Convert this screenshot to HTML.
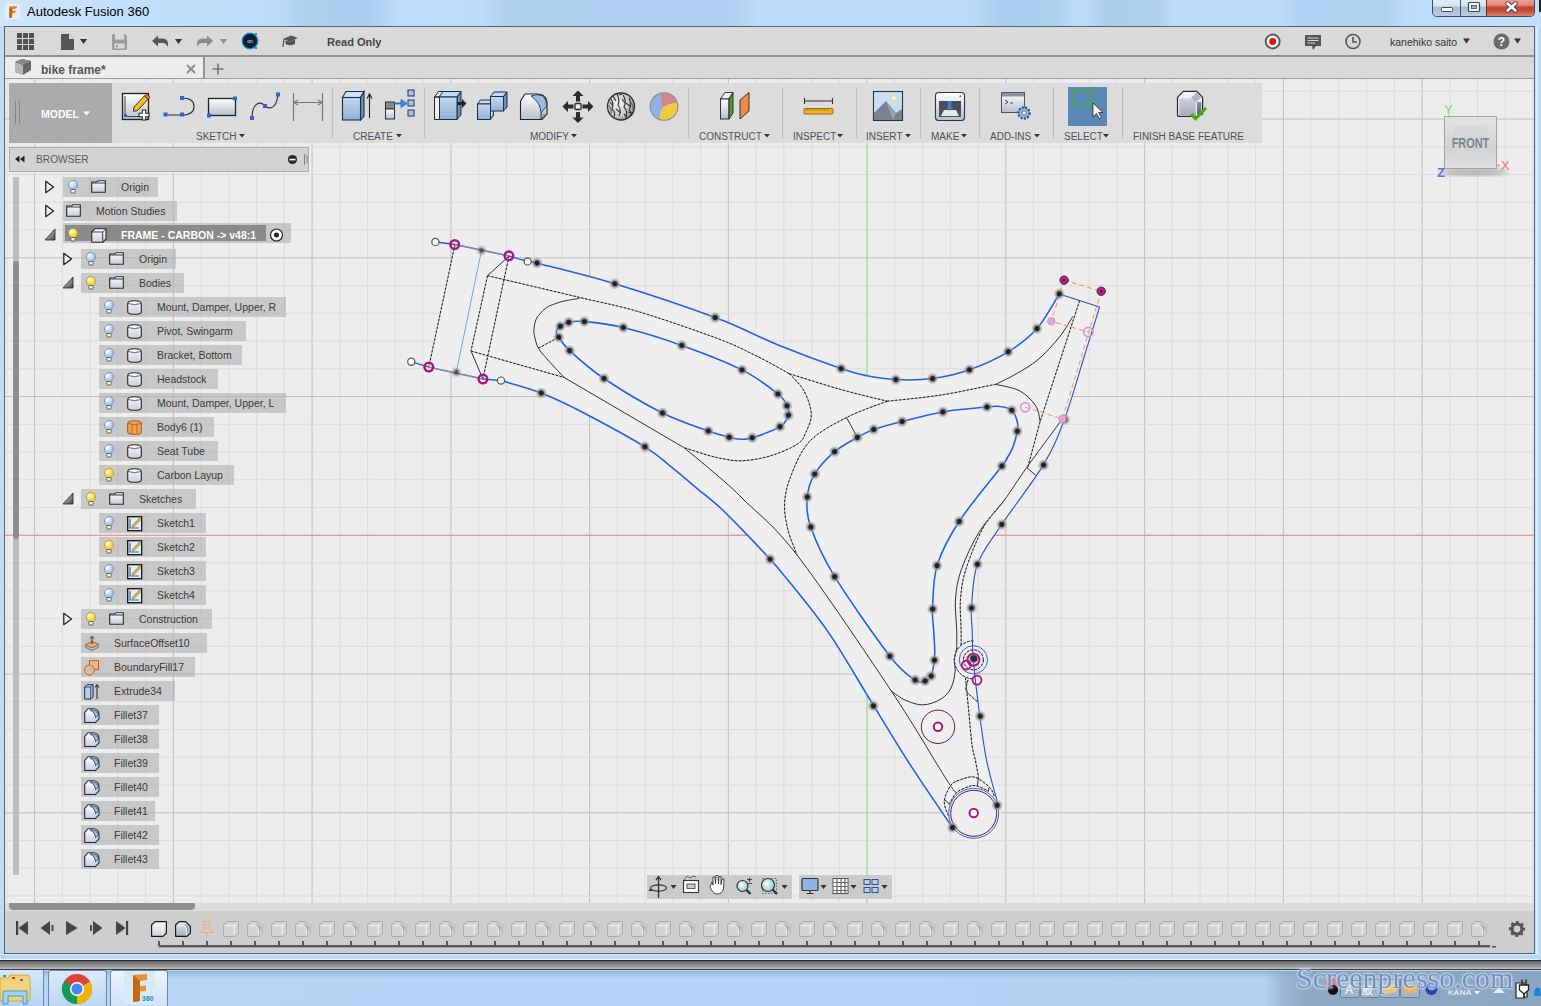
<!DOCTYPE html>
<html><head><meta charset="utf-8">
<style>
*{margin:0;padding:0;box-sizing:border-box}
html,body{width:1541px;height:1006px;overflow:hidden;font-family:"Liberation Sans",sans-serif;background:#b9d5f3;position:relative}
.a{position:absolute}
#title{left:0;top:0;width:1541px;height:26px;background:linear-gradient(90deg,#cfe5f9 0px,#bfdffb 150px,#bcdcf9 275px,#abcfef 310px,#aacdef 370px,#bcddfb 400px,#bcdcfa 480px,#adcff0 510px,#aecff1 730px,#bbdcfa 760px,#badafa 970px,#a9cdee 1000px,#abcfef 1055px,#bcdcf9 1075px,#b8d9f7 1090px,#aacdee 1105px,#adcff0 1155px,#bcdcfa 1175px,#bbdbf9 1280px,#aed0f2 1305px,#b0d2f2 1385px,#bcdcfa 1410px,#c2dff9 1541px)}
#ttext{left:27px;top:4px;font-size:13px;color:#000;white-space:nowrap}
#frameL{left:0;top:26px;width:5px;height:934px;background:#bcd9f5}
#win{left:4px;top:26px;width:1531px;height:928px;border:1px solid #4d5a68;background:#ececec;overflow:hidden}
#tb1{left:0;top:0;width:1529px;height:28px;background:#d8d8d8}
#tbline{left:0;top:28px;width:1529px;height:2px;background:#8f8f8f}
#tabbar{left:0;top:30px;width:1529px;height:21px;background:#d8d8d8}
#tab{left:0;top:30px;width:199px;height:21px;background:#ececec;border-right:2px solid #a8a8a8}
#tabline{left:0;top:51px;width:1529px;height:1px;background:#a0a0a0}
#canvas{left:0;top:52px;width:1529px;height:825px;background-color:#ececec;overflow:hidden}
.lbl{font-size:9.5px;color:#4a4a4a;white-space:nowrap}
.tri{display:inline-block;width:0;height:0;border-left:3.5px solid transparent;border-right:3.5px solid transparent;border-top:4px solid #333;vertical-align:middle;margin-left:3px;position:relative;top:-1px}
.row{position:absolute;height:20px;background:rgba(190,190,190,0.62);font-size:10.5px;color:#333;line-height:20px;white-space:nowrap}
.rtxt{position:absolute;top:0}
</style></head><body>
<!-- title bar -->
<div class="a" id="title"></div>
<svg class="a" style="left:4px;top:3px" width="18" height="19"><rect x="0.5" y="0.5" width="16" height="16" fill="#e6f0fa" stroke="#d5e4f3"/><path d="M5.5 3.5 L13 3 L12.5 5.5 L8.5 6 L8.3 8 L11.8 7.8 L11.3 10 L8.2 10.2 L8 14.5 L5.2 15 Z" fill="#e8801f"/><path d="M5.5 3.5 L8.5 6 L8 14.5 L5.2 15 Z" fill="#c4620e"/></svg>
<div class="a" id="ttext">Autodesk Fusion 360</div>
<!-- title buttons -->
<div class="a" style="left:1432px;top:-2px;width:103px;height:19px;border:1px solid #3d4b5c;border-top:none;border-radius:0 0 5px 5px;overflow:hidden;background:#c3d5e8">
 <div class="a" style="left:0;top:0;width:28px;height:18px;background:linear-gradient(#e4eef8 0%,#d6e3f0 45%,#a9bed6 50%,#b8cde3 100%);border-right:1px solid #45566a"></div>
 <div class="a" style="left:28px;top:0;width:26px;height:18px;background:linear-gradient(#e4eef8 0%,#d6e3f0 45%,#a9bed6 50%,#b8cde3 100%);border-right:1px solid #6a2a20"></div>
 <div class="a" style="left:54px;top:0;width:49px;height:18px;background:linear-gradient(#eba79c 0%,#dc8a7c 40%,#c8452f 50%,#c94a34 70%,#d98270 100%)"></div>
</div>
<svg class="a" style="left:1432px;top:0" width="103" height="18">
 <rect x="9.5" y="7.5" width="11" height="4" rx="1" fill="#fff" stroke="#3b4656"/>
 <rect x="36.5" y="2.5" width="11" height="9" rx="1" fill="#fff" stroke="#3b4656" stroke-width="1.2"/><rect x="39.5" y="5.5" width="5" height="3" fill="#9fb6cf" stroke="#3b4656" stroke-width="0.8"/>
 <path d="M75.5 3.5 L83.5 10.5 M83.5 3.5 L75.5 10.5" stroke="#3b4656" stroke-width="4.4" stroke-linecap="round"/>
 <path d="M75.5 3.5 L83.5 10.5 M83.5 3.5 L75.5 10.5" stroke="#fff" stroke-width="2.6" stroke-linecap="round"/>
</svg>
<!-- frame -->
<div class="a" style="left:0;top:26px;width:1541px;height:934px;background:linear-gradient(90deg,#bfdbf6,#b8d6f4 50%,#c0dcf7)"></div>
<div class="a" style="left:1539px;top:0;width:2px;height:12px;background:#222"></div>
<div class="a" style="left:4px;top:26px;width:1531px;height:928px;border:1px solid #56626f;background:#ececec"></div>
<!-- toolbar -->
<div class="a" style="left:5px;top:27px;width:1529px;height:28px;background:#d9d9d9"></div>
<div class="a" style="left:5px;top:55px;width:1529px;height:2px;background:#8e8e8e"></div>
<div class="a" style="left:5px;top:57px;width:1529px;height:21px;background:#d9d9d9"></div>
<div class="a" style="left:5px;top:57px;width:198px;height:21px;background:#ececec"></div>
<div class="a" style="left:203px;top:57px;width:2px;height:21px;background:#939393"></div>
<div class="a" style="left:5px;top:78px;width:1529px;height:1px;background:#9a9a9a"></div>
<svg class="a" style="left:0;top:27px" width="400" height="52">
 <!-- grid icon -->
 <g fill="#505050"><rect x="17" y="6" width="5" height="5"/><rect x="23" y="6" width="5" height="5"/><rect x="29" y="6" width="5" height="5"/><rect x="17" y="12" width="5" height="5"/><rect x="23" y="12" width="5" height="5"/><rect x="29" y="12" width="5" height="5"/><rect x="17" y="18" width="5" height="5"/><rect x="23" y="18" width="5" height="5"/><rect x="29" y="18" width="5" height="5"/></g>
 <!-- file -->
 <path d="M61 7 L69 7 L74 12 L74 23 L61 23 Z" fill="#555"/><path d="M69 7 L69 12 L74 12" fill="#d9d9d9"/>
 <path d="M80 12 L87 12 L83.5 17 Z" fill="#333"/>
 <!-- save -->
 <path d="M112 8.5 Q112 7 113.5 7 L125 7 L127 9 L127 21.5 Q127 23 125.5 23 L113.5 23 Q112 23 112 21.5 Z" fill="#9c9c9c"/><rect x="115" y="7" width="9" height="5.5" fill="#d9d9d9"/><rect x="114.5" y="16.5" width="10" height="5" fill="#d9d9d9"/><rect x="116" y="18" width="2" height="2.5" fill="#9c9c9c"/>
 <!-- undo -->
 <path d="M152 14 L158 8.5 L158 11.5 L163 11.5 Q168 12 168 17 L168 20 Q166 16 163 16 L158 16 L158 19.5 Z" fill="#555"/>
 <path d="M175 12 L182 12 L178.5 17 Z" fill="#333"/>
 <!-- redo -->
 <path d="M213 14 L207 8.5 L207 11.5 L202 11.5 Q197 12 197 17 L197 20 Q199 16 202 16 L207 16 L207 19.5 Z" fill="#8a8a8a"/>
 <path d="M220 12 L227 12 L223.5 17 Z" fill="#8a8a8a"/>
 <!-- globe -->
 <circle cx="250" cy="14" r="7.8" fill="#0c1f30" stroke="#1a8fc4" stroke-width="1.3"/><text x="250" y="16" font-size="5" fill="#cfe" text-anchor="middle" font-family="Liberation Sans">on</text>
 <circle cx="256" cy="7" r="0.9" fill="#1a4f70"/><circle cx="256" cy="21" r="0.9" fill="#1a4f70"/>
 <!-- mortarboard -->
 <path d="M283 12 L291 8.5 L298 11 L290 14.5 Z" fill="#555"/><path d="M285.5 13.5 L285.5 17 Q290 19.5 295 17 L295 12.5 L290 14.5 Z" fill="#555"/><path d="M284 12 L283 20" stroke="#555" stroke-width="1.2"/>
 <text x="327" y="19" font-size="11" font-weight="bold" fill="#444" font-family="Liberation Sans">Read Only</text>
 <!-- tab -->
 <path d="M15 35 L22 32 L31 34 L31 43 L23 48 L15 45 Z" fill="#666"/><path d="M15 35 L23 38 L23 48 L15 45Z" fill="#b5b5b5"/><path d="M15 35 L22 32 L31 34 L23 38 Z" fill="#8a8a8a"/>
 <text x="41" y="47" font-size="12" font-weight="bold" fill="#555" font-family="Liberation Sans">bike frame*</text>
 <path d="M187 38 L195 46 M195 38 L187 46" stroke="#8a8a8a" stroke-width="1.8"/>
 <path d="M212.5 42 L223.5 42 M218 36.5 L218 47.5" stroke="#777" stroke-width="1.6"/>
</svg>
<svg class="a" style="left:1250px;top:27px" width="285" height="28">
 <circle cx="22.7" cy="14.5" r="7" fill="#f2f2f2" stroke="#555" stroke-width="1.8"/><circle cx="22.7" cy="14.5" r="3.4" fill="#e01010"/>
 <path d="M55 8 L71 8 L71 19 L66 19 L63 23 L62 19 L55 19 Z" fill="#555"/><path d="M57.5 11 L68.5 11 M57.5 13.5 L68.5 13.5 M57.5 16 L65 16" stroke="#d9d9d9" stroke-width="1"/>
 <circle cx="103" cy="14.5" r="7" fill="none" stroke="#555" stroke-width="1.6"/><path d="M103 10 L103 15 L107 15" stroke="#555" stroke-width="1.6" fill="none"/>
 <text x="140" y="18.5" font-size="10.5" fill="#333" font-family="Liberation Sans">kanehiko saito</text>
 <path d="M213 11.5 L220 11.5 L216.5 16.5 Z" fill="#333"/>
 <circle cx="251.5" cy="14.5" r="8" fill="#6a6a6a"/><text x="251.5" y="19" font-size="12" font-weight="bold" fill="#fff" text-anchor="middle" font-family="Liberation Sans">?</text>
 <path d="M264 11.5 L271 11.5 L267.5 16.5 Z" fill="#333"/>
</svg>
<div class="a" style="left:5px;top:79px;width:1529px;height:824px;background:#ededed"></div><svg class="a" style="left:0;top:0" width="1541" height="1006"><rect x="6.35" y="79" width="1" height="824" fill="#dcdcdc"/><rect x="34.10" y="79" width="1" height="824" fill="#bebebe"/><rect x="61.85" y="79" width="1" height="824" fill="#dcdcdc"/><rect x="89.60" y="79" width="1" height="824" fill="#dcdcdc"/><rect x="117.35" y="79" width="1" height="824" fill="#dcdcdc"/><rect x="145.10" y="79" width="1" height="824" fill="#dcdcdc"/><rect x="172.85" y="79" width="1" height="824" fill="#bebebe"/><rect x="200.60" y="79" width="1" height="824" fill="#dcdcdc"/><rect x="228.35" y="79" width="1" height="824" fill="#dcdcdc"/><rect x="256.10" y="79" width="1" height="824" fill="#dcdcdc"/><rect x="283.85" y="79" width="1" height="824" fill="#dcdcdc"/><rect x="311.60" y="79" width="1" height="824" fill="#bebebe"/><rect x="339.35" y="79" width="1" height="824" fill="#dcdcdc"/><rect x="367.10" y="79" width="1" height="824" fill="#dcdcdc"/><rect x="394.85" y="79" width="1" height="824" fill="#dcdcdc"/><rect x="422.60" y="79" width="1" height="824" fill="#dcdcdc"/><rect x="450.35" y="79" width="1" height="824" fill="#bebebe"/><rect x="478.10" y="79" width="1" height="824" fill="#dcdcdc"/><rect x="505.85" y="79" width="1" height="824" fill="#dcdcdc"/><rect x="533.60" y="79" width="1" height="824" fill="#dcdcdc"/><rect x="561.35" y="79" width="1" height="824" fill="#dcdcdc"/><rect x="589.10" y="79" width="1" height="824" fill="#bebebe"/><rect x="616.85" y="79" width="1" height="824" fill="#dcdcdc"/><rect x="644.60" y="79" width="1" height="824" fill="#dcdcdc"/><rect x="672.35" y="79" width="1" height="824" fill="#dcdcdc"/><rect x="700.10" y="79" width="1" height="824" fill="#dcdcdc"/><rect x="727.85" y="79" width="1" height="824" fill="#bebebe"/><rect x="755.60" y="79" width="1" height="824" fill="#dcdcdc"/><rect x="783.35" y="79" width="1" height="824" fill="#dcdcdc"/><rect x="811.10" y="79" width="1" height="824" fill="#dcdcdc"/><rect x="838.85" y="79" width="1" height="824" fill="#dcdcdc"/><rect x="866.60" y="79" width="1" height="824" fill="#bebebe"/><rect x="894.35" y="79" width="1" height="824" fill="#dcdcdc"/><rect x="922.10" y="79" width="1" height="824" fill="#dcdcdc"/><rect x="949.85" y="79" width="1" height="824" fill="#dcdcdc"/><rect x="977.60" y="79" width="1" height="824" fill="#dcdcdc"/><rect x="1005.35" y="79" width="1" height="824" fill="#bebebe"/><rect x="1033.10" y="79" width="1" height="824" fill="#dcdcdc"/><rect x="1060.85" y="79" width="1" height="824" fill="#dcdcdc"/><rect x="1088.60" y="79" width="1" height="824" fill="#dcdcdc"/><rect x="1116.35" y="79" width="1" height="824" fill="#dcdcdc"/><rect x="1144.10" y="79" width="1" height="824" fill="#bebebe"/><rect x="1171.85" y="79" width="1" height="824" fill="#dcdcdc"/><rect x="1199.60" y="79" width="1" height="824" fill="#dcdcdc"/><rect x="1227.35" y="79" width="1" height="824" fill="#dcdcdc"/><rect x="1255.10" y="79" width="1" height="824" fill="#dcdcdc"/><rect x="1282.85" y="79" width="1" height="824" fill="#bebebe"/><rect x="1310.60" y="79" width="1" height="824" fill="#dcdcdc"/><rect x="1338.35" y="79" width="1" height="824" fill="#dcdcdc"/><rect x="1366.10" y="79" width="1" height="824" fill="#dcdcdc"/><rect x="1393.85" y="79" width="1" height="824" fill="#dcdcdc"/><rect x="1421.60" y="79" width="1" height="824" fill="#bebebe"/><rect x="1449.35" y="79" width="1" height="824" fill="#dcdcdc"/><rect x="1477.10" y="79" width="1" height="824" fill="#dcdcdc"/><rect x="1504.85" y="79" width="1" height="824" fill="#dcdcdc"/><rect x="1532.60" y="79" width="1" height="824" fill="#dcdcdc"/><rect x="5" y="90.80" width="1529" height="1" fill="#dcdcdc"/><rect x="5" y="118.55" width="1529" height="1" fill="#bebebe"/><rect x="5" y="146.30" width="1529" height="1" fill="#dcdcdc"/><rect x="5" y="174.05" width="1529" height="1" fill="#dcdcdc"/><rect x="5" y="201.80" width="1529" height="1" fill="#dcdcdc"/><rect x="5" y="229.55" width="1529" height="1" fill="#dcdcdc"/><rect x="5" y="257.30" width="1529" height="1" fill="#bebebe"/><rect x="5" y="285.05" width="1529" height="1" fill="#dcdcdc"/><rect x="5" y="312.80" width="1529" height="1" fill="#dcdcdc"/><rect x="5" y="340.55" width="1529" height="1" fill="#dcdcdc"/><rect x="5" y="368.30" width="1529" height="1" fill="#dcdcdc"/><rect x="5" y="396.05" width="1529" height="1" fill="#bebebe"/><rect x="5" y="423.80" width="1529" height="1" fill="#dcdcdc"/><rect x="5" y="451.55" width="1529" height="1" fill="#dcdcdc"/><rect x="5" y="479.30" width="1529" height="1" fill="#dcdcdc"/><rect x="5" y="507.05" width="1529" height="1" fill="#dcdcdc"/><rect x="5" y="534.80" width="1529" height="1" fill="#bebebe"/><rect x="5" y="562.55" width="1529" height="1" fill="#dcdcdc"/><rect x="5" y="590.30" width="1529" height="1" fill="#dcdcdc"/><rect x="5" y="618.05" width="1529" height="1" fill="#dcdcdc"/><rect x="5" y="645.80" width="1529" height="1" fill="#dcdcdc"/><rect x="5" y="673.55" width="1529" height="1" fill="#bebebe"/><rect x="5" y="701.30" width="1529" height="1" fill="#dcdcdc"/><rect x="5" y="729.05" width="1529" height="1" fill="#dcdcdc"/><rect x="5" y="756.80" width="1529" height="1" fill="#dcdcdc"/><rect x="5" y="784.55" width="1529" height="1" fill="#dcdcdc"/><rect x="5" y="812.30" width="1529" height="1" fill="#bebebe"/><rect x="5" y="840.05" width="1529" height="1" fill="#dcdcdc"/><rect x="5" y="867.80" width="1529" height="1" fill="#dcdcdc"/><rect x="5" y="895.55" width="1529" height="1" fill="#dcdcdc"/><rect x="5" y="534.80" width="1529" height="1" fill="#f08c8c"/><rect x="866.60" y="143" width="1" height="760" fill="#98e398"/></svg><svg class="a" style="left:0;top:0" width="1541" height="1006">
<defs><radialGradient id="dot" r="0.5"><stop offset="0" stop-color="#1a1a1a"/><stop offset="0.36" stop-color="#2a2a2a"/><stop offset="0.5" stop-color="#6a6a6a" stop-opacity="0.72"/><stop offset="0.82" stop-color="#b0b0b0" stop-opacity="0.5"/><stop offset="1" stop-color="#c8c8c8" stop-opacity="0"/></radialGradient></defs>
<path d="M455 244.5 L509 256  C512.1 256.9 522.9 260.2 527.6 261.4 C532.3 262.6 522.5 259.5 537.0 263.2 C551.5 266.9 585.1 274.7 614.8 283.8 C644.5 292.9 687.7 307.3 715.2 317.6 C742.7 327.9 759.0 337.3 780.0 345.8 C801.0 354.3 826.5 363.6 841.0 368.6 C855.5 373.6 857.9 374.0 867.0 375.8 C876.1 377.6 884.9 379.1 895.8 379.6 C906.7 380.1 920.3 380.2 932.6 378.6 C944.9 377.0 956.8 374.3 969.4 369.8 C982.0 365.3 996.9 358.7 1008.2 351.8 C1019.5 344.9 1028.5 338.2 1037.0 328.6 C1045.5 319.0 1055.6 299.7 1059.3 293.9 L1099.6 307  C1097.2 314.8 1090.9 335.2 1085.0 354.0 C1079.1 372.8 1071.3 401.0 1064.4 419.5 C1057.5 438.0 1053.9 447.4 1043.4 464.9 C1033.0 482.4 1012.7 507.9 1001.7 524.5 C990.7 541.1 982.4 550.4 977.4 564.3 C972.4 578.2 972.4 597.0 971.5 608.0 C970.6 619.0 971.9 621.3 972.2 630.0 C972.5 638.7 972.3 646.7 973.4 660.0 C974.5 673.3 976.8 693.3 979.0 710.0 C981.2 726.7 983.4 744.5 986.5 760.0 C989.6 775.5 995.8 795.8 997.6 802.9 A25 25 0 0 1 952.5 827.6  C945.3 816.9 922.4 783.7 909.3 763.4 C896.2 743.1 886.4 726.4 873.8 705.9 C861.2 685.4 844.3 656.5 833.7 640.2 C823.1 623.9 819.4 619.6 810.4 608.0 C801.4 596.4 786.7 578.5 780.0 570.4 C773.3 562.3 775.6 565.1 770.1 559.2 C764.6 553.3 755.6 543.5 747.2 534.9 C738.9 526.3 728.6 515.4 720.0 507.5 C711.4 499.6 703.7 494.0 695.7 487.3 C687.7 480.6 680.3 474.1 671.8 467.4 C663.3 460.6 659.9 456.0 644.9 446.8 C629.9 437.6 599.3 421.0 582.0 412.0 C564.7 403.0 554.7 398.2 541.2 393.0 C527.7 387.8 507.7 382.7 501.0 380.6 L428.8 367.1 Z" fill="#efefef"/>
<path d="M455 244.5 L428.8 367.1 M509 256 L482.9 379 M487.5 275.7 L471 351" stroke="#a0a0a0" stroke-width="0.8" fill="none"/><path d="M455 244.5 L428.8 367.1 M509 256 L482.9 379 M487.5 275.7 L471 351" stroke="#111" stroke-width="0.95" fill="none" stroke-dasharray="2.4 1.6"/>
<path d="M509 256 L487.5 275.7 M471 351 L482.9 379" stroke="#1a1a1a" stroke-width="0.9" fill="none"/>
<path d="M481.5 250.4 L456.3 372.1" stroke="#6a98f0" stroke-width="0.9" fill="none"/>
<path d="M487.5 275.7 C502.9 279.3 554.6 291.4 580.0 297.5 C605.4 303.6 617.0 305.2 640.0 312.1 C663.0 319.0 698.5 331.4 718.0 338.7 C737.5 346.0 745.1 350.4 757.0 356.2 C768.9 362.0 783.9 370.8 789.3 373.7" stroke="#a0a0a0" stroke-width="0.8" fill="none"/><path d="M487.5 275.7 C502.9 279.3 554.6 291.4 580.0 297.5 C605.4 303.6 617.0 305.2 640.0 312.1 C663.0 319.0 698.5 331.4 718.0 338.7 C737.5 346.0 745.1 350.4 757.0 356.2 C768.9 362.0 783.9 370.8 789.3 373.7" stroke="#111" stroke-width="0.95" fill="none" stroke-dasharray="2.4 1.6"/>
<path d="M789.3 373.7 C797.8 376.3 823.7 384.7 840.0 389.3 C856.3 393.9 879.3 399.2 887.2 401.2" stroke="#a0a0a0" stroke-width="0.8" fill="none"/><path d="M789.3 373.7 C797.8 376.3 823.7 384.7 840.0 389.3 C856.3 393.9 879.3 399.2 887.2 401.2" stroke="#111" stroke-width="0.95" fill="none" stroke-dasharray="2.4 1.6"/>
<path d="M887.2 401.2 C896.0 400.2 921.9 398.0 940.0 395.2 C958.1 392.4 986.4 386.1 995.7 384.3" stroke="#a0a0a0" stroke-width="0.8" fill="none"/><path d="M887.2 401.2 C896.0 400.2 921.9 398.0 940.0 395.2 C958.1 392.4 986.4 386.1 995.7 384.3" stroke="#111" stroke-width="0.95" fill="none" stroke-dasharray="2.4 1.6"/>
<path d="M471 351 L564.2 377.5" stroke="#a0a0a0" stroke-width="0.8" fill="none"/><path d="M471 351 L564.2 377.5" stroke="#111" stroke-width="0.95" fill="none" stroke-dasharray="2.4 1.6"/>
<path d="M564.2 377.5 L683.7 447.5  C689.8 452.5 710.0 468.9 720.0 477.7 C730.0 486.4 731.2 487.1 744.0 500.0 C756.8 512.9 772.5 523.2 797.0 555.0 C821.5 586.8 866.3 653.5 891.3 691.0 C916.3 728.5 935.9 763.1 946.8 780.0 C957.7 796.9 955.0 790.5 956.6 792.6" stroke="#1a1a1a" stroke-width="0.9" fill="none"/>
<path d="M579.6 298.4 C577.1 298.8 568.8 300.0 564.7 300.9 C560.6 301.8 557.8 302.8 554.8 303.9 C551.8 305.0 549.3 305.7 546.8 307.4 C544.3 309.1 541.7 311.8 539.9 313.9 C538.1 316.0 536.9 317.1 535.9 319.8 C534.9 322.5 534.1 326.8 533.9 329.8 C533.7 332.8 534.1 334.6 534.9 337.7 C535.6 340.8 536.6 344.9 538.4 348.2 C540.2 351.5 543.1 354.4 545.8 357.6 C548.5 360.8 551.7 364.2 554.8 367.5 C557.9 370.8 562.6 375.8 564.2 377.5" stroke="#1a1a1a" stroke-width="0.9" fill="none"/>
<path d="M538.4 348.2 L558.8 337.2" stroke="#a0a0a0" stroke-width="0.8" fill="none"/><path d="M538.4 348.2 L558.8 337.2" stroke="#111" stroke-width="0.95" fill="none" stroke-dasharray="2.4 1.6"/>
<path d="M789.3 373.7 C791.7 376.4 799.8 383.4 803.5 390.0 C807.2 396.6 810.9 406.5 811.3 413.5 C811.7 420.5 808.3 426.9 806.0 432.0 C803.7 437.1 803.4 440.1 797.4 444.1 C791.4 448.1 779.3 453.2 770.0 456.0 C760.7 458.8 750.0 460.4 741.7 460.8 C733.4 461.2 726.4 459.4 720.0 458.2 C713.6 457.0 709.6 455.7 703.6 453.9 C697.6 452.1 687.0 448.6 683.7 447.5" stroke="#a0a0a0" stroke-width="0.8" fill="none"/><path d="M789.3 373.7 C791.7 376.4 799.8 383.4 803.5 390.0 C807.2 396.6 810.9 406.5 811.3 413.5 C811.7 420.5 808.3 426.9 806.0 432.0 C803.7 437.1 803.4 440.1 797.4 444.1 C791.4 448.1 779.3 453.2 770.0 456.0 C760.7 458.8 750.0 460.4 741.7 460.8 C733.4 461.2 726.4 459.4 720.0 458.2 C713.6 457.0 709.6 455.7 703.6 453.9 C697.6 452.1 687.0 448.6 683.7 447.5" stroke="#111" stroke-width="0.95" fill="none" stroke-dasharray="2.4 1.6"/>
<path d="M887.2 401.2 C880.4 403.9 859.4 410.8 846.5 417.5 C833.6 424.2 819.0 431.6 809.7 441.3 C800.5 451.0 795.2 465.3 791.0 475.7 C786.8 486.1 785.1 494.4 784.6 503.5 C784.1 512.5 785.9 521.4 788.0 530.0 C790.1 538.6 795.5 550.8 797.0 555.0" stroke="#a0a0a0" stroke-width="0.8" fill="none"/><path d="M887.2 401.2 C880.4 403.9 859.4 410.8 846.5 417.5 C833.6 424.2 819.0 431.6 809.7 441.3 C800.5 451.0 795.2 465.3 791.0 475.7 C786.8 486.1 785.1 494.4 784.6 503.5 C784.1 512.5 785.9 521.4 788.0 530.0 C790.1 538.6 795.5 550.8 797.0 555.0" stroke="#111" stroke-width="0.95" fill="none" stroke-dasharray="2.4 1.6"/>
<path d="M846.5 417.5 L857.4 437.4" stroke="#1a1a1a" stroke-width="0.9" fill="none"/>
<path d="M891.3 691.0 C893.6 692.5 899.7 697.7 905.0 700.0 C910.3 702.3 917.1 705.1 923.1 704.9 C929.1 704.7 936.4 701.8 941.0 699.0 C945.6 696.2 948.6 692.6 951.0 688.0 C953.4 683.4 954.6 676.1 955.1 671.4 C955.6 666.7 954.0 663.9 954.3 660.0 C954.6 656.1 956.5 650.0 957.0 648.0" stroke="#1a1a1a" stroke-width="0.9" fill="none"/>
<path d="M1072.8 316.5 C1070.6 319.9 1065.4 329.6 1059.6 336.8 C1053.8 344.0 1045.5 353.3 1038.2 359.5 C1030.9 365.7 1023.1 369.9 1016.0 374.0 C1008.9 378.1 999.1 382.6 995.7 384.3" stroke="#1a1a1a" stroke-width="0.9" fill="none"/>
<path d="M995.7 384.3 C999.7 385.4 1013.1 387.3 1019.8 390.9 C1026.5 394.5 1032.3 400.7 1035.7 405.8 C1039.1 410.9 1039.4 419.1 1040.1 421.7" stroke="#1a1a1a" stroke-width="0.9" fill="none"/>
<path d="M1079.7 300.4 L1040.1 421.7 L1027.7 467.5" stroke="#a0a0a0" stroke-width="0.8" fill="none"/><path d="M1079.7 300.4 L1040.1 421.7 L1027.7 467.5" stroke="#111" stroke-width="0.95" fill="none" stroke-dasharray="2.4 1.6"/>
<path d="M1062.5 418.8 C1056.5 426.9 1036.6 453.7 1026.7 467.5 C1016.8 481.3 1011.2 490.9 1003.3 501.6 C995.4 512.3 986.4 520.2 979.4 531.5 C972.4 542.8 965.5 558.0 961.5 569.2 C957.5 580.5 956.3 588.9 955.5 599.0 C954.7 609.1 956.5 621.5 956.7 630.0 C956.9 638.5 956.7 646.7 956.7 650.0" stroke="#1a1a1a" stroke-width="0.9" fill="none"/>
<path d="M1003.3 501.6 C999.9 506.0 989.2 516.8 983.0 528.0 C976.8 539.2 969.8 557.2 966.0 569.0 C962.2 580.8 961.3 588.8 960.5 599.0 C959.7 609.2 961.0 622.3 961.1 630.0 C961.2 637.7 961.1 642.5 961.1 645.0" stroke="#a0a0a0" stroke-width="0.8" fill="none"/><path d="M1003.3 501.6 C999.9 506.0 989.2 516.8 983.0 528.0 C976.8 539.2 969.8 557.2 966.0 569.0 C962.2 580.8 961.3 588.8 960.5 599.0 C959.7 609.2 961.0 622.3 961.1 630.0 C961.2 637.7 961.1 642.5 961.1 645.0" stroke="#111" stroke-width="0.95" fill="none" stroke-dasharray="2.4 1.6"/>
<path d="M1026.7 467.5 L1035.7 475.4" stroke="#1a1a1a" stroke-width="0.9" fill="none"/>
<path d="M965.5 677.7 C966.0 683.1 967.5 698.8 968.6 710.0 C969.7 721.2 970.9 736.7 972.0 745.0 C973.1 753.3 974.2 754.6 975.3 760.0 C976.4 765.4 978.0 774.2 978.5 777.1" stroke="#a0a0a0" stroke-width="0.8" fill="none"/><path d="M965.5 677.7 C966.0 683.1 967.5 698.8 968.6 710.0 C969.7 721.2 970.9 736.7 972.0 745.0 C973.1 753.3 974.2 754.6 975.3 760.0 C976.4 765.4 978.0 774.2 978.5 777.1" stroke="#111" stroke-width="0.95" fill="none" stroke-dasharray="2.4 1.6"/>
<path d="M968.0 680.0 C967.7 681.7 965.3 687.2 966.0 690.0 C966.7 692.8 970.0 695.0 972.0 697.0 C974.0 699.0 977.0 701.2 978.0 702.0" stroke="#a0a0a0" stroke-width="0.8" fill="none"/><path d="M968.0 680.0 C967.7 681.7 965.3 687.2 966.0 690.0 C966.7 692.8 970.0 695.0 972.0 697.0 C974.0 699.0 977.0 701.2 978.0 702.0" stroke="#111" stroke-width="0.95" fill="none" stroke-dasharray="2.4 1.6"/>
<path d="M948.3 815.7 C947.6 813.3 943.9 806.5 944.3 801.4 C944.7 796.3 948.1 789.0 950.7 785.4 C953.3 781.8 956.0 781.4 960.0 780.0 C964.0 778.6 969.6 775.9 974.5 777.1 C979.4 778.3 986.3 784.1 989.6 787.4 C992.9 790.6 993.6 795.1 994.4 796.6" stroke="#a0a0a0" stroke-width="0.8" fill="none"/><path d="M948.3 815.7 C947.6 813.3 943.9 806.5 944.3 801.4 C944.7 796.3 948.1 789.0 950.7 785.4 C953.3 781.8 956.0 781.4 960.0 780.0 C964.0 778.6 969.6 775.9 974.5 777.1 C979.4 778.3 986.3 784.1 989.6 787.4 C992.9 790.6 993.6 795.1 994.4 796.6" stroke="#111" stroke-width="0.95" fill="none" stroke-dasharray="2.4 1.6"/>
<path d="M949.1 804.5 C950.4 802.5 953.2 795.6 956.6 792.6 C960.0 789.6 966.3 787.3 969.8 786.2 C973.3 785.1 974.7 785.4 977.7 786.2 C980.7 787.0 986.3 790.2 988.0 791.0" stroke="#a0a0a0" stroke-width="0.8" fill="none"/><path d="M949.1 804.5 C950.4 802.5 953.2 795.6 956.6 792.6 C960.0 789.6 966.3 787.3 969.8 786.2 C973.3 785.1 974.7 785.4 977.7 786.2 C980.7 787.0 986.3 790.2 988.0 791.0" stroke="#111" stroke-width="0.95" fill="none" stroke-dasharray="2.4 1.6"/>
<path d="M944.7 799.8 L949.5 804.1 M978.5 777.1 L977.3 786.2 M988.8 787.8 L988.4 791.8" stroke="#1a1a1a" stroke-width="0.9" fill="none"/>
<circle cx="938" cy="726.8" r="16.7" fill="none" stroke="#5a1a55" stroke-width="1"/>
<circle cx="973.4" cy="659.8" r="14.1" fill="none" stroke="#3a62d0" stroke-width="1"/>
<path d="M973.4 640.8 A19 19 0 0 0 973.4 678.8" stroke="#a0a0a0" stroke-width="0.8" fill="none"/><path d="M973.4 640.8 A19 19 0 0 0 973.4 678.8" stroke="#111" stroke-width="0.95" fill="none" stroke-dasharray="2.4 1.6"/><circle cx="973.4" cy="659.8" r="10" stroke="#a0a0a0" stroke-width="0.8" fill="none"/><circle cx="973.4" cy="659.8" r="10" stroke="#111" stroke-width="0.95" fill="none" stroke-dasharray="2.4 1.6"/>
<circle cx="973.7" cy="813.3" r="23" fill="none" stroke="#5a1a55" stroke-width="1"/>
<path d="M436 242 L455 244.5 L509 256" stroke="#1f5fe6" stroke-width="1.3" fill="none"/>
<path d="M509.0 256.0 C512.1 256.9 522.9 260.2 527.6 261.4 C532.3 262.6 522.5 259.5 537.0 263.2 C551.5 266.9 585.1 274.7 614.8 283.8 C644.5 292.9 687.7 307.3 715.2 317.6 C742.7 327.9 759.0 337.3 780.0 345.8 C801.0 354.3 826.5 363.6 841.0 368.6 C855.5 373.6 857.9 374.0 867.0 375.8 C876.1 377.6 884.9 379.1 895.8 379.6 C906.7 380.1 920.3 380.2 932.6 378.6 C944.9 377.0 956.8 374.3 969.4 369.8 C982.0 365.3 996.9 358.7 1008.2 351.8 C1019.5 344.9 1028.5 338.2 1037.0 328.6 C1045.5 319.0 1055.6 299.7 1059.3 293.9" stroke="#1f5fe6" stroke-width="1.55" fill="none"/>
<path d="M1059.3 293.9 L1099.6 307" stroke="#2a4fc0" stroke-width="1.1" fill="none"/>
<path d="M1099.6 307.0 C1097.2 314.8 1090.9 335.2 1085.0 354.0 C1079.1 372.8 1071.3 401.0 1064.4 419.5 C1057.5 438.0 1053.9 447.4 1043.4 464.9 C1033.0 482.4 1012.7 507.9 1001.7 524.5 C990.7 541.1 982.4 550.4 977.4 564.3 C972.4 578.2 972.4 597.0 971.5 608.0 C970.6 619.0 971.9 621.3 972.2 630.0 C972.5 638.7 972.3 646.7 973.4 660.0 C974.5 673.3 976.8 693.3 979.0 710.0 C981.2 726.7 983.4 744.5 986.5 760.0 C989.6 775.5 995.8 795.8 997.6 802.9" stroke="#2a4fc0" stroke-width="1.1" fill="none"/>
<circle cx="973.7" cy="813.3" r="25" fill="none" stroke="#3565d8" stroke-width="1"/>
<path d="M411.3 361.7 L428.8 367.1 L482.9 379 L501 380.6" stroke="#1f5fe6" stroke-width="1.3" fill="none"/>
<path d="M952.5 827.6 C945.3 816.9 922.4 783.7 909.3 763.4 C896.2 743.1 886.4 726.4 873.8 705.9 C861.2 685.4 844.3 656.5 833.7 640.2 C823.1 623.9 819.4 619.6 810.4 608.0 C801.4 596.4 786.7 578.5 780.0 570.4 C773.3 562.3 775.6 565.1 770.1 559.2 C764.6 553.3 755.6 543.5 747.2 534.9 C738.9 526.3 728.6 515.4 720.0 507.5 C711.4 499.6 703.7 494.0 695.7 487.3 C687.7 480.6 680.3 474.1 671.8 467.4 C663.3 460.6 659.9 456.0 644.9 446.8 C629.9 437.6 599.3 421.0 582.0 412.0 C564.7 403.0 554.7 398.2 541.2 393.0 C527.7 387.8 507.7 382.7 501.0 380.6" stroke="#1f5fe6" stroke-width="1.55" fill="none"/>
<path d="M556.3 331.7 C556.5 329.9 558.2 327.9 560.3 326.3 C562.4 324.7 564.7 323.1 568.7 322.3 C572.7 321.5 575.3 320.7 584.4 321.6 C593.5 322.5 607.1 323.5 623.3 327.5 C639.5 331.5 662.0 338.3 681.8 345.4 C701.6 352.5 726.0 361.8 742.0 369.9 C758.0 378.0 770.4 388.0 777.9 394.0 C785.4 400.0 785.2 402.3 787.0 405.8 C788.8 409.3 789.6 411.7 788.4 415.2 C787.2 418.7 786.0 422.9 780.0 426.7 C774.0 430.5 758.8 435.7 752.2 437.8 C745.6 439.9 744.2 439.3 740.4 439.2 C736.6 439.1 734.6 438.6 729.2 437.2 C723.9 435.8 719.4 434.9 708.3 430.9 C697.2 426.9 679.9 421.7 662.5 413.0 C645.1 404.3 619.5 388.9 604.0 378.5 C588.5 368.1 577.2 357.5 569.7 350.6 C562.2 343.7 561.0 340.4 558.8 337.2 C556.6 334.0 556.0 333.5 556.3 331.7 Z" stroke="#1f5fe6" stroke-width="1.55" fill="none"/>
<path d="M857.4 437.4 C863.9 433.7 866.2 432.0 873.7 429.4 C881.2 426.8 890.6 424.4 902.1 421.5 C913.6 418.6 928.8 414.3 942.9 411.9 C957.0 409.5 977.5 407.9 987.0 407.0 C996.5 406.1 995.8 405.8 999.9 406.4 C1004.0 406.9 1008.9 407.8 1011.8 410.3 C1014.7 412.9 1016.4 418.2 1017.3 421.7 C1018.2 425.2 1018.0 426.9 1017.3 431.2 C1016.5 435.5 1014.5 443.1 1012.8 447.6 C1011.0 452.2 1008.6 455.4 1006.8 458.5 C1005.0 461.6 1009.8 455.5 1001.9 466.0 C994.0 476.5 969.9 504.9 959.1 521.5 C948.3 538.1 941.5 551.0 937.1 565.6 C932.7 580.2 933.2 598.4 932.6 609.0 C932.0 619.6 933.3 622.7 933.6 629.0 C933.9 635.3 934.5 641.8 934.6 647.0 C934.7 652.2 935.0 655.4 934.4 660.2 C933.8 665.1 932.6 672.6 931.1 676.1 C929.6 679.6 927.8 680.4 925.1 681.0 C922.5 681.6 921.1 684.1 915.2 680.0 C909.3 675.9 903.3 673.4 889.9 656.2 C876.5 639.0 847.9 598.2 834.7 576.7 C821.5 555.2 815.4 540.3 810.8 527.0 C806.2 513.7 806.6 505.8 807.3 497.0 C807.9 488.2 810.2 481.7 814.7 474.1 C819.2 466.6 827.5 457.8 834.6 451.7 C841.7 445.6 850.9 441.1 857.4 437.4 Z" stroke="#1f5fe6" stroke-width="1.55" fill="none"/>
<path d="M1064.1 280.1 L1101.2 291.2 M1064.1 280.1 L1051.3 321.3 L1088.3 332 M1101.2 291.2 L1062.5 418.8 L1025.2 407.3" stroke="#e6a070" stroke-width="1.1" fill="none" stroke-dasharray="5 3"/>
<path d="M455 244.5 L509 256 M428.8 367.1 L482.9 379" stroke="#d8904a" stroke-width="0.8" fill="none"/>
<circle cx="537" cy="263" r="6" fill="url(#dot)"/>
<circle cx="614.8" cy="283.8" r="6" fill="url(#dot)"/>
<circle cx="715.2" cy="317.6" r="6" fill="url(#dot)"/>
<circle cx="841.1" cy="368.6" r="6" fill="url(#dot)"/>
<circle cx="895.8" cy="379.6" r="6" fill="url(#dot)"/>
<circle cx="932.6" cy="378.6" r="6" fill="url(#dot)"/>
<circle cx="969.4" cy="369.8" r="6" fill="url(#dot)"/>
<circle cx="1008.2" cy="351.8" r="6" fill="url(#dot)"/>
<circle cx="1037" cy="328.6" r="6" fill="url(#dot)"/>
<circle cx="1059.3" cy="293.9" r="6" fill="url(#dot)"/>
<circle cx="541.2" cy="393" r="6" fill="url(#dot)"/>
<circle cx="644.9" cy="446.8" r="6" fill="url(#dot)"/>
<circle cx="770.1" cy="559.2" r="6" fill="url(#dot)"/>
<circle cx="873.4" cy="705.9" r="6" fill="url(#dot)"/>
<circle cx="952.5" cy="827.6" r="6" fill="url(#dot)"/>
<circle cx="997.2" cy="805.3" r="6" fill="url(#dot)"/>
<circle cx="1043.6" cy="465" r="6" fill="url(#dot)"/>
<circle cx="1064.5" cy="419.5" r="6" fill="url(#dot)"/>
<circle cx="1001.7" cy="524.5" r="6" fill="url(#dot)"/>
<circle cx="977.4" cy="564.3" r="6" fill="url(#dot)"/>
<circle cx="971.5" cy="608" r="6" fill="url(#dot)"/>
<circle cx="980.2" cy="716.2" r="6" fill="url(#dot)"/>
<circle cx="560.3" cy="326.3" r="6" fill="url(#dot)"/>
<circle cx="568.7" cy="322.3" r="6" fill="url(#dot)"/>
<circle cx="584.4" cy="321.6" r="6" fill="url(#dot)"/>
<circle cx="623.3" cy="327.5" r="6" fill="url(#dot)"/>
<circle cx="681.8" cy="345.4" r="6" fill="url(#dot)"/>
<circle cx="742" cy="369.9" r="6" fill="url(#dot)"/>
<circle cx="777.9" cy="394" r="6" fill="url(#dot)"/>
<circle cx="787" cy="405.8" r="6" fill="url(#dot)"/>
<circle cx="788.4" cy="415.2" r="6" fill="url(#dot)"/>
<circle cx="780" cy="426.7" r="6" fill="url(#dot)"/>
<circle cx="752.2" cy="437.8" r="6" fill="url(#dot)"/>
<circle cx="729.2" cy="437.2" r="6" fill="url(#dot)"/>
<circle cx="708.3" cy="430.9" r="6" fill="url(#dot)"/>
<circle cx="662.5" cy="413" r="6" fill="url(#dot)"/>
<circle cx="604" cy="378.5" r="6" fill="url(#dot)"/>
<circle cx="569.7" cy="350.6" r="6" fill="url(#dot)"/>
<circle cx="558.8" cy="337.2" r="6" fill="url(#dot)"/>
<circle cx="857.4" cy="437.4" r="6" fill="url(#dot)"/>
<circle cx="873.7" cy="429.4" r="6" fill="url(#dot)"/>
<circle cx="902.1" cy="421.5" r="6" fill="url(#dot)"/>
<circle cx="942.9" cy="411.9" r="6" fill="url(#dot)"/>
<circle cx="987" cy="407" r="6" fill="url(#dot)"/>
<circle cx="1011.8" cy="410.3" r="6" fill="url(#dot)"/>
<circle cx="1017.3" cy="431.2" r="6" fill="url(#dot)"/>
<circle cx="1001.9" cy="466" r="6" fill="url(#dot)"/>
<circle cx="959.1" cy="521.5" r="6" fill="url(#dot)"/>
<circle cx="937.1" cy="565.6" r="6" fill="url(#dot)"/>
<circle cx="932.7" cy="609" r="6" fill="url(#dot)"/>
<circle cx="934.4" cy="660.2" r="6" fill="url(#dot)"/>
<circle cx="931.1" cy="676.1" r="6" fill="url(#dot)"/>
<circle cx="925.1" cy="681" r="6" fill="url(#dot)"/>
<circle cx="915.2" cy="680" r="6" fill="url(#dot)"/>
<circle cx="889.9" cy="656.2" r="6" fill="url(#dot)"/>
<circle cx="834.7" cy="576.7" r="6" fill="url(#dot)"/>
<circle cx="810.8" cy="527" r="6" fill="url(#dot)"/>
<circle cx="807.3" cy="497" r="6" fill="url(#dot)"/>
<circle cx="814.7" cy="474.1" r="6" fill="url(#dot)"/>
<circle cx="834.6" cy="451.7" r="6" fill="url(#dot)"/>
<circle cx="481.5" cy="250.4" r="6" fill="url(#dot)" opacity="0.6"/>
<circle cx="456.3" cy="372.1" r="6" fill="url(#dot)" opacity="0.6"/>
<circle cx="435.4" cy="241.9" r="3.6" fill="#fff" stroke="#555" stroke-width="1.2"/>
<circle cx="527.6" cy="261.4" r="3.6" fill="#fff" stroke="#555" stroke-width="1.2"/>
<circle cx="411.3" cy="361.7" r="3.6" fill="#fff" stroke="#555" stroke-width="1.2"/>
<circle cx="501" cy="380.6" r="3.6" fill="#fff" stroke="#555" stroke-width="1.2"/>
<circle cx="454.7" cy="244.5" r="4.3" fill="none" stroke="#b0127f" stroke-width="2.4"/>
<circle cx="508.9" cy="255.8" r="4.3" fill="none" stroke="#b0127f" stroke-width="2.4"/>
<circle cx="428.8" cy="367.1" r="4.3" fill="none" stroke="#b0127f" stroke-width="2.4"/>
<circle cx="482.9" cy="379" r="4.3" fill="none" stroke="#b0127f" stroke-width="2.4"/>
<circle cx="938" cy="726.8" r="4.2" fill="#fff" stroke="#b0127f" stroke-width="2"/>
<circle cx="973.7" cy="813" r="4.2" fill="#fff" stroke="#b0127f" stroke-width="2"/>
<circle cx="973.4" cy="659.8" r="6" fill="none" stroke="#b0127f" stroke-width="2"/>
<circle cx="966.3" cy="665" r="4.5" fill="none" stroke="#b0127f" stroke-width="1.8"/>
<circle cx="977" cy="680.1" r="4.5" fill="none" stroke="#b0127f" stroke-width="1.8"/>
<circle cx="973.8" cy="658.5" r="4" fill="#333" stroke="#999" stroke-width="0.8"/>
<circle cx="1064.1" cy="280.1" r="4.2" fill="#c0158f" stroke="#333" stroke-width="1"/><circle cx="1064.1" cy="280.1" r="1.2" fill="#222"/>
<circle cx="1101.2" cy="291.2" r="4.2" fill="#c0158f" stroke="#333" stroke-width="1"/><circle cx="1101.2" cy="291.2" r="1.2" fill="#222"/>
<circle cx="1088.3" cy="332" r="4.6" fill="none" stroke="#d690cc" stroke-width="1.6"/>
<circle cx="1025.2" cy="407.3" r="4.6" fill="none" stroke="#d690cc" stroke-width="1.6"/>
<circle cx="1051.3" cy="321.3" r="3.8" fill="#e0a6d8" stroke="#c890c0" stroke-width="0.8"/>
<circle cx="1062.5" cy="418.8" r="3.8" fill="#e0a6d8" stroke="#c890c0" stroke-width="0.8"/>
</svg><!-- ribbon -->
<div class="a" style="left:9px;top:83px;width:103px;height:60px;background:#ababab"></div>
<div class="a" style="left:112px;top:83px;width:1150px;height:60px;background:#dcdcdc"></div>
<svg class="a" style="left:0;top:83px" width="1270" height="60" font-family="Liberation Sans">
 <defs>
  <linearGradient id="gw" x1="0" y1="0" x2="0" y2="1"><stop offset="0" stop-color="#ffffff"/><stop offset="1" stop-color="#b7bfcc"/></linearGradient>
  <linearGradient id="gb" x1="0" y1="0" x2="0" y2="1"><stop offset="0" stop-color="#c5d9f0"/><stop offset="1" stop-color="#8fb0d8"/></linearGradient>
  <radialGradient id="gs" cx="0.4" cy="0.35" r="0.7"><stop offset="0" stop-color="#f4f4f4"/><stop offset="0.6" stop-color="#a8a8a8"/><stop offset="1" stop-color="#505050"/></radialGradient>
 </defs>
 <path d="M15.5 18 L15.5 41 M19.5 18 L19.5 41" stroke="#858585" stroke-width="1"/>
 <text x="41" y="35" font-size="10.5" font-weight="bold" fill="#fff">MODEL</text>
 <path d="M83 28.5 L90 28.5 L86.5 32.5 Z" fill="#fff"/>
 <!-- sketch create -->
 <rect x="122.5" y="10.5" width="26" height="26" fill="url(#gw)" stroke="#222" stroke-width="1.3"/>
 <path d="M125 13 L125 33.5 L140 33.5" stroke="#333" stroke-width="0.9" fill="none"/><rect x="124" y="31" width="3" height="3" fill="#3366cc"/>
 <path d="M134 24 L144.5 12.8 L148 16.3 L137.5 27.5 L133.5 28.3 Z" fill="#f2c21a" stroke="#222" stroke-width="0.9"/><path d="M144.5 12.8 L146.5 10.8 L150 14.3 L148 16.3 Z" fill="#e07b39" stroke="#222" stroke-width="0.7"/>
 <path d="M144 26.5 L144 37.5 M138.5 32 L149.5 32" stroke="#222" stroke-width="4.4"/><path d="M144 27.5 L144 36.5 M139.5 32 L148.5 32" stroke="#fff" stroke-width="2.4"/>
 <!-- line arc -->
 <path d="M166 32 L182 32 M182 15 Q194 15 194 23.5 Q194 32 182 32" stroke="#333" stroke-width="1.2" fill="none"/>
 <rect x="163.5" y="29.5" width="4" height="4" fill="#2f66d0"/><rect x="180" y="29.5" width="4" height="4" fill="#2f66d0"/><rect x="180" y="13" width="4" height="4" fill="#2f66d0"/>
 <!-- rect -->
 <rect x="208.5" y="15.5" width="27" height="17" fill="url(#gw)" stroke="#222" stroke-width="1.3"/>
 <rect x="233" y="13.5" width="4" height="4" fill="#2f66d0"/><rect x="207" y="30.5" width="4" height="4" fill="#2f66d0"/>
 <!-- spline -->
 <path d="M252 35 C252 20 260 18 264 22 C268 26 276 28 278 12" stroke="#333" stroke-width="1.2" fill="none"/>
 <rect x="250" y="33" width="4" height="4" fill="#2f66d0"/><rect x="263" y="21" width="4" height="4" fill="#2f66d0"/><rect x="276" y="9.5" width="4" height="4" fill="#2f66d0"/>
 <!-- dimension -->
 <path d="M293.5 10 L293.5 38 M322.5 10 L322.5 38 M294 19.5 L322 19.5 M294 19.5 L298 17 M294 19.5 L298 22 M322 19.5 L318 17 M322 19.5 L318 22" stroke="#777" stroke-width="1.2" fill="none"/>
 <path d="M332.5 5 L332.5 55" stroke="#bdbdbd" stroke-width="1.2"/>
 <text x="196" y="57" font-size="10" fill="#4d5058">SKETCH</text><path d="M239 51 L245 51 L242 54.5Z" fill="#333"/>
 <!-- extrude -->
 <path d="M342.5 14.5 L346 8.5 L364 8.5 L360.5 14.5 Z" fill="#d3e3f4" stroke="#1f2f47" stroke-width="1.1"/>
 <path d="M360.5 14.5 L364 8.5 L364 33 L360.5 37 Z" fill="#6f8fba" stroke="#1f2f47" stroke-width="1.1"/>
 <rect x="342.5" y="14.5" width="18" height="22.5" fill="url(#gb)" stroke="#1f2f47" stroke-width="1.1"/>
 <path d="M369.5 35 L369.5 12 M367 15.5 L369.5 11 L372 15.5" stroke="#222" stroke-width="1.1" fill="none"/>
 <!-- pattern -->
 <rect x="408" y="7" width="6" height="6" fill="#a9c4e6" stroke="#23395a"/><rect x="408" y="17" width="6" height="6" fill="#a9c4e6" stroke="#23395a"/><rect x="408" y="27" width="6" height="6" fill="#a9c4e6" stroke="#23395a"/>
 <rect x="385.5" y="19" width="9" height="7" fill="#8a8a8a" stroke="#333"/><rect x="385.5" y="26" width="9" height="10" fill="url(#gw)" stroke="#333"/>
 <path d="M394 20 L401 20 L401 16.5 L407 20.5 L401 24.5 L401 21 L394 21 Z" fill="#3c8ae8" stroke="#2a5fb0" stroke-width="0.8"/>
 <path d="M424.5 5 L424.5 55" stroke="#bdbdbd" stroke-width="1.2"/>
 <text x="353" y="57" font-size="10" fill="#4d5058">CREATE</text><path d="M396 51 L402 51 L399 54.5Z" fill="#333"/>
 <!-- press pull -->
 <path d="M434.5 14 L438.5 8.5 L446 8.5 L442 14 Z M434.5 14 L442 14 L442 36.5 L434.5 36.5Z" fill="#f0f0f0" stroke="#222" stroke-width="1"/>
 <path d="M439 14 L443 8.5 L461 8.5 L457 14 Z" fill="#c5d9f0" stroke="#1f2f47" stroke-width="1"/>
 <path d="M457 14 L461 8.5 L461 32 L457 36.5 Z" fill="#6f8fba" stroke="#1f2f47" stroke-width="1"/>
 <rect x="439.5" y="14" width="17.5" height="22.5" fill="url(#gb)" stroke="#1f2f47" stroke-width="1"/>
 <path d="M457 19 L462 19 L462 16 L466.5 20.5 L462 25 L462 22 L457 22 Z" fill="#222"/>
 <!-- combine -->
 <path d="M477.5 21 L480.5 17 L493 17 L490 21 Z" fill="#c5d9f0" stroke="#1f2f47"/><rect x="477.5" y="21" width="13" height="15.5" fill="url(#gb)" stroke="#1f2f47"/>
 <path d="M490.5 13.5 L494 9 L507 9 L503.5 13.5 Z" fill="#c5d9f0" stroke="#1f2f47"/><path d="M503.5 13.5 L507 9 L507 24 L503.5 28 Z" fill="#6f8fba" stroke="#1f2f47"/><rect x="490.5" y="13.5" width="13" height="14.5" fill="url(#gb)" stroke="#1f2f47"/>
 <path d="M490.5 36.5 L493.5 32.5 L493.5 28" stroke="#1f2f47" fill="#6f8fba"/>
 <!-- fillet -->
 <path d="M520.5 18 L525 11 L537 11 Q547 11 547 21 L547 31 L542 36.5 L520.5 36.5 Z" fill="url(#gw)" stroke="#222" stroke-width="1.1"/>
 <path d="M531 13 Q537 10 543 13 Q547 17 546.5 23 L541 30 Q541 20 531 13 Z" fill="#9ebde3" stroke="#1f2f47" stroke-width="0.9"/>
 <path d="M541 30 L541 36.5 L547 31" fill="#a0a7b4" stroke="#222" stroke-width="0.8"/>
 <!-- move -->
 <g fill="#2a2a2a">
 <path d="M578 7.5 L583.5 13 L580 13 L580 18.5 L576 18.5 L576 13 L572.5 13 Z"/>
 <path d="M578 40 L583.5 34.5 L580 34.5 L580 29 L576 29 L576 34.5 L572.5 34.5 Z"/>
 <path d="M562.5 23.5 L568 18 L568 21.5 L573.5 21.5 L573.5 25.5 L568 25.5 L568 29 Z"/>
 <path d="M593.5 23.5 L588 18 L588 21.5 L582.5 21.5 L582.5 25.5 L588 25.5 L588 29 Z"/>
 </g>
 <rect x="575" y="20.5" width="6" height="6" rx="1" fill="#e8ecf4" stroke="#2a2a2a" stroke-width="1.3"/>
 <!-- appearance sphere -->
 <defs><radialGradient id="aps" cx="0.4" cy="0.4" r="0.65"><stop offset="0" stop-color="#f4f4f4"/><stop offset="0.7" stop-color="#c8c8c8"/><stop offset="1" stop-color="#8a8a8a"/></radialGradient></defs><circle cx="621" cy="23.5" r="13.5" fill="url(#aps)" stroke="#2a2f38" stroke-width="1.4"/>
 <path d="M611 16 Q614 20 612 26 Q616 30 614 34 M617 11 Q620 17 618 22 Q622 27 619 33 M623 12 Q627 18 624 24 Q628 28 626 35 M629 15 Q632 22 629 27 Q633 30 630 33 M613 13 L616 18 M626 20 L631 24 M616 26 L621 30 M622 16 L625 20 M610 19 L613 23 M628 29 L632 30 M619 12 L622 11 M624 31 L627 34" stroke="#2a2a2a" stroke-width="1.2" fill="none" opacity="0.9"/>
 <path d="M609 22 Q612 28 611 31 M631 19 Q634 25 633 28" stroke="#555" stroke-width="1.5" fill="none" opacity="0.7"/>
 <!-- physical material -->
 <defs><clipPath id="pmc"><circle cx="664" cy="23.5" r="13.6"/></clipPath></defs>
 <g clip-path="url(#pmc)">
  <rect x="649" y="9" width="30" height="30" fill="#8db3e6"/>
  <path d="M662 8 Q659 18 663 24 Q670 20 680 19 L680 8 Z" fill="#d6838c"/>
  <path d="M663 24 Q670 20 680 19 L680 40 L660 40 Q658 32 663 24 Z" fill="#efcd3c"/>
 </g>
 <circle cx="664" cy="23.5" r="13.8" fill="none" stroke="#8c8c8c" stroke-width="1.1"/>
 <path d="M688.5 5 L688.5 55" stroke="#bdbdbd" stroke-width="1.2"/>
 <text x="530" y="57" font-size="10" fill="#4d5058">MODIFY</text><path d="M571 51 L577 51 L574 54.5Z" fill="#333"/>
 <!-- construct -->
 <path d="M720.5 16 L725 9.5 L733 9.5 L729 16 Z" fill="#f0f0f0" stroke="#222" stroke-width="0.9"/><rect x="720.5" y="16" width="8.5" height="20" fill="url(#gw)" stroke="#222" stroke-width="0.9"/>
 <path d="M729 16 L733 9.5 L733 30 L729 36 Z" fill="#4f9a3a" stroke="#222" stroke-width="0.9"/>
 <path d="M740 17 L749 9.5 L749 28 L740 36 Z" fill="#ee8c4a" stroke="#222" stroke-width="0.9"/>
 <path d="M782.5 5 L782.5 55" stroke="#bdbdbd" stroke-width="1.2"/>
 <text x="699" y="57" font-size="10" fill="#4d5058">CONSTRUCT</text><path d="M764 51 L770 51 L767 54.5Z" fill="#333"/>
 <!-- inspect ruler -->
 <path d="M804.5 18 L832.5 18 M804.5 15 L804.5 21 M832.5 15 L832.5 21" stroke="#333" stroke-width="1.1"/>
 <rect x="804" y="25.5" width="29" height="5.5" rx="1" fill="#f2b51c" stroke="#7a5200" stroke-width="0.8"/>
 <path d="M807 26 L807 28 M810 26 L810 28 M813 26 L813 28 M816 26 L816 28 M819 26 L819 28 M822 26 L822 28 M825 26 L825 28 M828 26 L828 28" stroke="#7a5200" stroke-width="0.6"/>
 <path d="M856.5 5 L856.5 55" stroke="#bdbdbd" stroke-width="1.2"/>
 <text x="793" y="57" font-size="10" fill="#4d5058">INSPECT</text><path d="M837 51 L843 51 L840 54.5Z" fill="#333"/>
 <!-- insert -->
 <rect x="873.5" y="8.5" width="29" height="29" fill="#c9dff2" stroke="#333" stroke-width="1.1"/>
 <path d="M874 37 L874 30 L886 18 L896 30 L902 26 L902 37 Z" fill="#7a8391"/><path d="M886 18 L896 30 L893 37 Z" fill="#9aa3af"/>
 <circle cx="894" cy="15" r="2.5" fill="#fff7c8" stroke="#f0d070" stroke-width="0.6"/>
 <path d="M920.5 5 L920.5 55" stroke="#bdbdbd" stroke-width="1.2"/>
 <text x="866" y="57" font-size="10" fill="#4d5058">INSERT</text><path d="M905 51 L911 51 L908 54.5Z" fill="#333"/>
 <!-- make -->
 <rect x="935.5" y="9.5" width="29" height="28" rx="3" fill="url(#gw)" stroke="#333" stroke-width="1.1"/>
 <rect x="939" y="18" width="22" height="16" fill="#4b4f57"/><path d="M941 33 L944 27 L956 27 L959 33 Z" fill="#e8e8e8"/>
 <rect x="948" y="18" width="3.5" height="7" fill="#3c7fd6"/><path d="M946.5 24 L953 24 L949.8 28Z" fill="#3c7fd6"/><rect x="959.5" y="12.5" width="1.6" height="1.6" fill="#1a9a1a"/>
 <path d="M979.5 5 L979.5 55" stroke="#bdbdbd" stroke-width="1.2"/>
 <text x="931" y="57" font-size="10" fill="#4d5058">MAKE</text><path d="M961 51 L967 51 L964 54.5Z" fill="#333"/>
 <!-- add-ins -->
 <rect x="1001.5" y="9.5" width="23" height="20" fill="url(#gw)" stroke="#555" stroke-width="1"/><rect x="1002" y="10" width="22" height="3.5" fill="#8a93a0"/>
 <path d="M1005 17 L1008 19 L1005 21 M1010 20 L1013 20" stroke="#333" stroke-width="0.9" fill="none"/>
 <circle cx="1024" cy="30" r="5.5" fill="#9fbfe6" stroke="#2d4e84" stroke-width="2.4" stroke-dasharray="2 1.3"/><circle cx="1024" cy="30" r="2.2" fill="#fff" stroke="#2d4e84" stroke-width="0.8"/>
 <path d="M1053.5 5 L1053.5 55" stroke="#bdbdbd" stroke-width="1.2"/>
 <text x="990" y="57" font-size="10" fill="#4d5058">ADD-INS</text><path d="M1034 51 L1040 51 L1037 54.5Z" fill="#333"/>
 <!-- select -->
 <rect x="1068" y="4" width="39" height="39" fill="#5b89b6"/>
 <rect x="1073.5" y="8.5" width="20" height="13.5" fill="none" stroke="#4caa2a" stroke-width="1.4"/>
 <path d="M1093 20 L1093 34 L1096.5 30.5 L1099.5 36 L1101.5 35 L1098.7 29.5 L1103 29.5 Z" fill="#fff" stroke="#222" stroke-width="0.8"/>
 <path d="M1122.5 5 L1122.5 55" stroke="#bdbdbd" stroke-width="1.2"/>
 <text x="1064" y="57" font-size="10" fill="#4d5058">SELECT</text><path d="M1103 51 L1109 51 L1106 54.5Z" fill="#333"/>
 <!-- finish base feature -->
 <defs><linearGradient id="gfb" x1="0" y1="0" x2="0" y2="1"><stop offset="0" stop-color="#cdd1d9"/><stop offset="1" stop-color="#a7adba"/></linearGradient>
 <linearGradient id="gfr" x1="0" y1="0" x2="0" y2="1"><stop offset="0" stop-color="#8790a0"/><stop offset="1" stop-color="#59616e"/></linearGradient></defs>
 <path d="M1177.5 14.3 L1183.3 8.3 L1196.8 8.3 L1202.6 14.3 L1202.6 31 L1197.5 33.4 L1178.7 33.4 Q1177.5 33.4 1177.5 32 Z" fill="#eef0f4" stroke="#2a2a2a" stroke-width="1.2" stroke-linejoin="round"/>
 <rect x="1179.3" y="15.4" width="16.5" height="17" fill="url(#gfb)"/>
 <path d="M1191 14.7 L1196.6 9.5 L1201.3 14.4 L1196.3 19 Z" fill="#b0b5c0"/>
 <rect x="1197" y="19" width="4.3" height="12.5" fill="url(#gfr)"/>
 <path d="M1191.2 31 L1195.6 35.8 L1206 25" stroke="#4caa10" stroke-width="3" fill="none"/>
 <text x="1133" y="57" font-size="10" fill="#4d5058">FINISH BASE FEATURE</text>
</svg>
<svg class="a" style="left:0;top:140px" width="320" height="740" font-family="Liberation Sans"><defs>
<radialGradient id="bb" cx="0.35" cy="0.35" r="0.7"><stop offset="0" stop-color="#ffffff"/><stop offset="1" stop-color="#8fb2e6"/></radialGradient>
<radialGradient id="by" cx="0.35" cy="0.35" r="0.7"><stop offset="0" stop-color="#fffbd0"/><stop offset="1" stop-color="#ecc820"/></radialGradient>
<linearGradient id="tg" x1="0" y1="0" x2="1" y2="1"><stop offset="0" stop-color="#f0f0f0"/><stop offset="1" stop-color="#444"/></linearGradient>
<linearGradient id="fw" x1="0" y1="0" x2="0" y2="1"><stop offset="0" stop-color="#ffffff"/><stop offset="1" stop-color="#c9ced6"/></linearGradient>
<g id="exc"><path d="M0.8 0.8 L8.5 6.5 L0.8 12.2 Z" fill="#f2f2f2" stroke="#222" stroke-width="1.3" stroke-linejoin="round"/></g>
<g id="exe"><path d="M10 0 L10 11 L0 11 Z" fill="url(#tg)" stroke="#222" stroke-width="0.8"/></g>
<g id="bulbb"><path d="M5 0.5 C8 0.5 9.6 2.5 9.6 5 C9.6 7 8 8 7.3 9.5 L2.7 9.5 C2 8 0.4 7 0.4 5 C0.4 2.5 2 0.5 5 0.5 Z" fill="url(#bb)" stroke="#6a88b8" stroke-width="0.8"/><rect x="2.8" y="9.5" width="4.4" height="3.5" rx="0.8" fill="#f4f4f4" stroke="#444" stroke-width="0.8"/></g>
<g id="bulby"><path d="M5 0.5 C8 0.5 9.6 2.5 9.6 5 C9.6 7 8 8 7.3 9.5 L2.7 9.5 C2 8 0.4 7 0.4 5 C0.4 2.5 2 0.5 5 0.5 Z" fill="url(#by)" stroke="#b89a10" stroke-width="0.8"/><rect x="2.8" y="9.5" width="4.4" height="3.5" rx="0.8" fill="#f4f4f4" stroke="#444" stroke-width="0.8"/></g>
<g id="folder"><path d="M0.7 2 L6 2 L6.8 0.7 L14.3 0.7 L14.3 12.3 L0.7 12.3 Z" fill="url(#fw)" stroke="#2a2a2a" stroke-width="1.1" stroke-linejoin="round"/><path d="M0.7 3 L14.3 3" stroke="#2a2a2a" stroke-width="0.9"/></g>
<g id="cube"><path d="M0.7 4 L4 0.7 L15 0.7 L15 11 L11.7 14.3 L0.7 14.3 Z" fill="url(#fw)" stroke="#2a2a2a" stroke-width="1.1" stroke-linejoin="round"/><path d="M11.7 4 L11.7 14.3 M0.7 4 L11.7 4 L15 0.7" stroke="#2a2a2a" stroke-width="0.9" fill="none"/></g>
<g id="body"><path d="M0.7 3.5 Q0.7 0.7 7.5 0.7 Q14.3 0.7 14.3 3.5 L14.3 12 Q14.3 14.3 7.5 14.3 Q0.7 14.3 0.7 12 Z" fill="url(#fw)" stroke="#2a2a2a" stroke-width="1.1"/><path d="M1 3.5 Q7.5 6 14 3.5" stroke="#2a2a2a" stroke-width="0.7" fill="none"/></g>
<g id="body6"><path d="M0.7 3.5 Q0.7 0.7 7.5 0.7 Q14.3 0.7 14.3 3.5 L14.3 12 Q14.3 14.3 7.5 14.3 Q0.7 14.3 0.7 12 Z" fill="#f0a35a" stroke="#b55a10" stroke-width="1.1"/><path d="M1 3.5 Q7.5 6 14 3.5 M5 5 L5 13.5 M10 5 L10 13.5" stroke="#b55a10" stroke-width="0.9" fill="none"/></g>
<g id="sketch"><rect x="0.7" y="0.7" width="14" height="14" fill="#e8eef6" stroke="#111" stroke-width="1.3"/><path d="M3 3 L3 12 L12 12" stroke="#2a5fb0" stroke-width="1.2" fill="none"/><path d="M5 10 L12.5 2 L14 3.5 L6.5 11 Z" fill="#f2c21a" stroke="#333" stroke-width="0.5"/></g>
<g id="offset"><path d="M1 9 L8 5.5 L15 8.5 L8 12 Z" fill="#f3a56a" stroke="#555" stroke-width="0.8"/><path d="M1 11 L8 14.5 L15 11" stroke="#555" stroke-width="0.8" fill="none"/><path d="M8 8 L8 0.5 M6 2.5 L8 0.5 L10 2.5" stroke="#222" stroke-width="0.9" fill="none"/></g>
<g id="bfill"><rect x="5.5" y="0.7" width="9" height="9" fill="#f7b58a" stroke="#b55a10" stroke-width="0.9"/><circle cx="5.5" cy="10" r="5" fill="#f7b58a" stroke="#b55a10" stroke-width="0.9"/><path d="M5.5 5 L5.5 10 L10.5 10" fill="#9ebde3"/></g>
<g id="extrude"><path d="M0.7 3 L3 0.7 L9 0.7 L9 13 L6.7 15 L0.7 15 Z" fill="#b9cfea" stroke="#1f2f47" stroke-width="1"/><path d="M6.7 3 L6.7 15 M0.7 3 L6.7 3 L9 0.7" stroke="#1f2f47" stroke-width="0.8" fill="none"/><path d="M13 15 L13 1 M11 3.5 L13 0.5 L15 3.5" stroke="#222" stroke-width="1" fill="none"/></g>
<g id="fillet"><path d="M0.7 4.5 L4 0.7 L9 0.7 Q15 0.7 15 7 L15 11 L11.5 14.5 L0.7 14.5 Z" fill="url(#fw)" stroke="#1f2f47" stroke-width="1.1"/><path d="M6 2 Q12 1 14.5 6.5 L11.5 10 Q11 4 6 2 Z" fill="#9ebde3" stroke="#1f2f47" stroke-width="0.8"/></g>
</defs>
<rect x="9.5" y="7.5" width="299" height="24" fill="#d2d2d2" stroke="#ababab"/>
<path d="M15 19 L19.5 15.5 L19.5 22.5 Z M20 19 L24.5 15.5 L24.5 22.5 Z" fill="#222"/>
<text x="36" y="23" font-size="10.2" fill="#5a5a5a">BROWSER</text>
<circle cx="292.5" cy="19.5" r="4.6" fill="#2a2a2a"/><rect x="289.5" y="18.8" width="6" height="1.6" fill="#fff"/>
<path d="M304.5 14 L304.5 25 M307 15 L307 23.5" stroke="#777" stroke-width="0.9"/>
<rect x="13" y="37" width="6" height="698" fill="#bdbdbd"/>
<rect x="13" y="121" width="6" height="278" rx="3" fill="#8e8e8e"/>
<rect x="63" y="37" width="95" height="20" fill="rgba(175,175,175,0.6)"/>
<use href="#exc" x="45" y="40.5"/>
<use href="#bulbb" x="68" y="40"/>
<use href="#folder" x="91" y="40"/>
<text x="121" y="51" font-size="10.5" fill="#383838">Origin</text>
<rect x="63" y="61" width="114" height="20" fill="rgba(175,175,175,0.6)"/>
<use href="#exc" x="45" y="64.5"/>
<use href="#folder" x="66" y="64"/>
<text x="96" y="75" font-size="10.5" fill="#383838">Motion Studies</text>
<rect x="63" y="83" width="228" height="20" fill="rgba(175,175,175,0.6)"/>
<rect x="65" y="85" width="201" height="16" fill="#8a8a8a"/>
<use href="#exe" x="45" y="89"/>
<use href="#bulby" x="68" y="88"/>
<use href="#cube" x="91" y="88"/>
<text x="121" y="99" font-size="10.5" font-weight="bold" fill="#fff">FRAME - CARBON -&gt; v48:1</text>
<circle cx="276.5" cy="95" r="6" fill="#fff" stroke="#222" stroke-width="1.2"/><circle cx="276.5" cy="95" r="2.5" fill="#222"/>
<rect x="81" y="109" width="95" height="20" fill="rgba(175,175,175,0.6)"/>
<use href="#exc" x="63" y="112.5"/>
<use href="#bulbb" x="86" y="112"/>
<use href="#folder" x="109" y="112"/>
<text x="139" y="123" font-size="10.5" fill="#383838">Origin</text>
<rect x="81" y="133" width="103" height="20" fill="rgba(175,175,175,0.6)"/>
<use href="#exe" x="63" y="137"/>
<use href="#bulby" x="86" y="136"/>
<use href="#folder" x="109" y="136"/>
<text x="139" y="147" font-size="10.5" fill="#383838">Bodies</text>
<rect x="99" y="157" width="187" height="20" fill="rgba(175,175,175,0.6)"/>
<use href="#bulbb" x="104" y="160"/>
<use href="#body" x="127" y="160"/>
<text x="157" y="171" font-size="10.5" fill="#383838">Mount, Damper, Upper, R</text>
<rect x="99" y="181" width="147" height="20" fill="rgba(175,175,175,0.6)"/>
<use href="#bulbb" x="104" y="184"/>
<use href="#body" x="127" y="184"/>
<text x="157" y="195" font-size="10.5" fill="#383838">Pivot, Swingarm</text>
<rect x="99" y="205" width="143" height="20" fill="rgba(175,175,175,0.6)"/>
<use href="#bulbb" x="104" y="208"/>
<use href="#body" x="127" y="208"/>
<text x="157" y="219" font-size="10.5" fill="#383838">Bracket, Bottom</text>
<rect x="99" y="229" width="119" height="20" fill="rgba(175,175,175,0.6)"/>
<use href="#bulbb" x="104" y="232"/>
<use href="#body" x="127" y="232"/>
<text x="157" y="243" font-size="10.5" fill="#383838">Headstock</text>
<rect x="99" y="253" width="187" height="20" fill="rgba(175,175,175,0.6)"/>
<use href="#bulbb" x="104" y="256"/>
<use href="#body" x="127" y="256"/>
<text x="157" y="267" font-size="10.5" fill="#383838">Mount, Damper, Upper, L</text>
<rect x="99" y="277" width="115" height="20" fill="rgba(175,175,175,0.6)"/>
<use href="#bulbb" x="104" y="280"/>
<use href="#body6" x="127" y="280"/>
<text x="157" y="291" font-size="10.5" fill="#383838">Body6 (1)</text>
<rect x="99" y="301" width="119" height="20" fill="rgba(175,175,175,0.6)"/>
<use href="#bulbb" x="104" y="304"/>
<use href="#body" x="127" y="304"/>
<text x="157" y="315" font-size="10.5" fill="#383838">Seat Tube</text>
<rect x="99" y="325" width="135" height="20" fill="rgba(175,175,175,0.6)"/>
<use href="#bulby" x="104" y="328"/>
<use href="#body" x="127" y="328"/>
<text x="157" y="339" font-size="10.5" fill="#383838">Carbon Layup</text>
<rect x="81" y="349" width="115" height="20" fill="rgba(175,175,175,0.6)"/>
<use href="#exe" x="63" y="353"/>
<use href="#bulby" x="86" y="352"/>
<use href="#folder" x="109" y="352"/>
<text x="139" y="363" font-size="10.5" fill="#383838">Sketches</text>
<rect x="99" y="373" width="107" height="20" fill="rgba(175,175,175,0.6)"/>
<use href="#bulbb" x="104" y="376"/>
<use href="#sketch" x="127" y="376"/>
<text x="157" y="387" font-size="10.5" fill="#383838">Sketch1</text>
<rect x="99" y="397" width="107" height="20" fill="rgba(175,175,175,0.6)"/>
<use href="#bulby" x="104" y="400"/>
<use href="#sketch" x="127" y="400"/>
<text x="157" y="411" font-size="10.5" fill="#383838">Sketch2</text>
<rect x="99" y="421" width="107" height="20" fill="rgba(175,175,175,0.6)"/>
<use href="#bulbb" x="104" y="424"/>
<use href="#sketch" x="127" y="424"/>
<text x="157" y="435" font-size="10.5" fill="#383838">Sketch3</text>
<rect x="99" y="445" width="107" height="20" fill="rgba(175,175,175,0.6)"/>
<use href="#bulbb" x="104" y="448"/>
<use href="#sketch" x="127" y="448"/>
<text x="157" y="459" font-size="10.5" fill="#383838">Sketch4</text>
<rect x="81" y="469" width="131" height="20" fill="rgba(175,175,175,0.6)"/>
<use href="#exc" x="63" y="472.5"/>
<use href="#bulby" x="86" y="472"/>
<use href="#folder" x="109" y="472"/>
<text x="139" y="483" font-size="10.5" fill="#383838">Construction</text>
<rect x="81" y="493" width="126" height="20" fill="rgba(175,175,175,0.6)"/>
<use href="#offset" x="84" y="496"/>
<text x="114" y="507" font-size="10.5" fill="#383838">SurfaceOffset10</text>
<rect x="81" y="517" width="114" height="20" fill="rgba(175,175,175,0.6)"/>
<use href="#bfill" x="84" y="520"/>
<text x="114" y="531" font-size="10.5" fill="#383838">BoundaryFill17</text>
<rect x="81" y="541" width="94" height="20" fill="rgba(175,175,175,0.6)"/>
<use href="#extrude" x="84" y="544"/>
<text x="114" y="555" font-size="10.5" fill="#383838">Extrude34</text>
<rect x="81" y="565" width="78" height="20" fill="rgba(175,175,175,0.6)"/>
<use href="#fillet" x="84" y="568"/>
<text x="114" y="579" font-size="10.5" fill="#383838">Fillet37</text>
<rect x="81" y="589" width="78" height="20" fill="rgba(175,175,175,0.6)"/>
<use href="#fillet" x="84" y="592"/>
<text x="114" y="603" font-size="10.5" fill="#383838">Fillet38</text>
<rect x="81" y="613" width="78" height="20" fill="rgba(175,175,175,0.6)"/>
<use href="#fillet" x="84" y="616"/>
<text x="114" y="627" font-size="10.5" fill="#383838">Fillet39</text>
<rect x="81" y="637" width="78" height="20" fill="rgba(175,175,175,0.6)"/>
<use href="#fillet" x="84" y="640"/>
<text x="114" y="651" font-size="10.5" fill="#383838">Fillet40</text>
<rect x="81" y="661" width="74" height="20" fill="rgba(175,175,175,0.6)"/>
<use href="#fillet" x="84" y="664"/>
<text x="114" y="675" font-size="10.5" fill="#383838">Fillet41</text>
<rect x="81" y="685" width="78" height="20" fill="rgba(175,175,175,0.6)"/>
<use href="#fillet" x="84" y="688"/>
<text x="114" y="699" font-size="10.5" fill="#383838">Fillet42</text>
<rect x="81" y="709" width="78" height="20" fill="rgba(175,175,175,0.6)"/>
<use href="#fillet" x="84" y="712"/>
<text x="114" y="723" font-size="10.5" fill="#383838">Fillet43</text>
</svg><svg class="a" style="left:1430px;top:98px" width="90" height="85" font-family="Liberation Sans">
<defs><linearGradient id="vc" x1="0" y1="0" x2="0" y2="1"><stop offset="0" stop-color="#e4e4e4"/><stop offset="0.6" stop-color="#cfcfcf"/><stop offset="1" stop-color="#dedede"/></linearGradient>
<filter id="blur3"><feGaussianBlur stdDeviation="2.5"/></filter></defs>
<ellipse cx="44" cy="74" rx="34" ry="3.5" fill="#888" opacity="0.6" filter="url(#blur3)"/>
<rect x="14.5" y="18.5" width="52" height="52" fill="url(#vc)" stroke="#9a9a9a" opacity="0.88"/>
<rect x="24" y="28" width="33" height="33" fill="#d3d5d8" opacity="0.7"/>
<text x="40.5" y="50" font-size="14" font-weight="bold" fill="#80868d" text-anchor="middle" transform="translate(40.5 0) scale(0.78 1) translate(-40.5 0)">FRONT</text>
<path d="M19 17 L19 20" stroke="#7ee07e" stroke-width="1.2"/><text x="14" y="15.5" font-size="13" fill="#6fe06f">Y</text>
<path d="M66.5 67.5 L70 67.5" stroke="#f08080" stroke-width="1.2"/><text x="71" y="72" font-size="13" fill="#f07070">X</text>
<text x="7" y="79" font-size="13" font-weight="bold" fill="#6a6ae8">Z</text>
</svg>
<div class="a" style="left:647px;top:875px;width:145px;height:24px;background:#cbcbcb"></div>
<div class="a" style="left:799px;top:875px;width:93px;height:24px;background:#cbcbcb"></div>
<svg class="a" style="left:640px;top:870px" width="260" height="34">
<defs><radialGradient id="lens" cx="0.4" cy="0.4" r="0.6"><stop offset="0" stop-color="#fff"/><stop offset="1" stop-color="#9cc"/></radialGradient></defs>
<g transform="translate(-10 0)">
<path d="M28.5 7 L28.5 28 M26 10 L28.5 6.5 L31 10" stroke="#333" stroke-width="1.3" fill="#fff"/>
<ellipse cx="28.5" cy="18" rx="8" ry="3.2" fill="none" stroke="#333" stroke-width="1.2"/><path d="M20.5 18 L18.5 21 L23 21 Z" fill="#333"/>
</g>
<path d="M30.5 15 L36.5 15 L33.5 19 Z" fill="#333"/>
<g transform="translate(-5 0)"><rect x="48.5" y="10.5" width="15" height="12" fill="#fff" stroke="#333" stroke-width="1.1"/><rect x="52" y="14" width="8" height="4.5" fill="#ccc" stroke="#333" stroke-width="0.8"/>
<path d="M49 10 L52 6 L55 8 L58 6 L61 7" stroke="#555" fill="none" stroke-width="0.9"/></g>
<g transform="translate(-2 0)"><path d="M72 17 L74 12 L75 15 L75 7 L77 7 L77.5 14 L78 5.5 L80 5.5 L80.5 14 L81 6.5 L83 6.5 L83 14.5 L84 9 L86 9 L85.5 19 Q84 24 79 24 Q75 24 72 17 Z" fill="#fff" stroke="#333" stroke-width="0.9"/></g>
<g transform="translate(2.5 0)"><circle cx="100" cy="16" r="5.5" fill="url(#lens)" stroke="#333" stroke-width="1.2"/><path d="M104 20 L108 24" stroke="#333" stroke-width="2.4"/><path d="M107 7.5 L107 12 M104.5 9.5 L109.5 9.5 M104.5 13.5 L109.5 13.5" stroke="#333" stroke-width="0.9"/></g>
<rect x="122.5" y="8.5" width="14" height="15" fill="none" stroke="#555" stroke-width="0.8" stroke-dasharray="1.5 1.5"/>
<circle cx="128" cy="15" r="6.5" fill="url(#lens)" stroke="#333" stroke-width="1.2"/><path d="M132.5 19.5 L137 24" stroke="#333" stroke-width="2.4"/>
<path d="M141.5 15 L147.5 15 L144.5 19 Z" fill="#333"/>
<g transform="translate(-4.5 0)">
<rect x="166.5" y="8.5" width="16" height="12" rx="1" fill="#8fb3e3" stroke="#333" stroke-width="1.2"/><path d="M171 23.5 L178 23.5 M174.5 21 L174.5 23.5" stroke="#333" stroke-width="1.2"/>
<path d="M185 15 L191 15 L188 19 Z" fill="#333"/>
<rect x="197.5" y="8.5" width="15" height="15" fill="#fff" stroke="#555" stroke-width="1"/>
<path d="M201.5 9 L201.5 23 M205.5 9 L205.5 23 M209.5 9 L209.5 23 M198 12.5 L212 12.5 M198 16.5 L212 16.5 M198 20.5 L212 20.5" stroke="#666" stroke-width="1.2"/>
<path d="M215 15 L221 15 L218 19 Z" fill="#333"/>
<rect x="228.5" y="9.5" width="6" height="5" fill="#b9cfea" stroke="#2a4e8a"/><rect x="236.5" y="9.5" width="6" height="5" fill="#b9cfea" stroke="#2a4e8a"/><rect x="228.5" y="17.5" width="6" height="5" fill="#b9cfea" stroke="#2a4e8a"/><rect x="236.5" y="17.5" width="6" height="5" fill="#b9cfea" stroke="#2a4e8a"/>
<path d="M246 15 L252 15 L249 19 Z" fill="#333"/>
</g>
</svg>
<div class="a" style="left:5px;top:903px;width:1529px;height:8px;background:#dcdcdc"></div>
<div class="a" style="left:9px;top:903px;width:186px;height:7px;border-radius:0 0 4px 4px;background:#8f8f8f"></div>
<div class="a" style="left:5px;top:911px;width:1529px;height:42px;background:#cecece"></div>
<svg class="a" style="left:0;top:911px" width="1541" height="45"><g fill="#444"><rect x="16" y="10" width="2.2" height="14"/><path d="M18.5 17 L28 10 L28 24 Z"/><path d="M40.5 17 L50 10 L50 24 Z"/><rect x="51.5" y="14" width="2" height="6"/><path d="M66 10 L77.5 17 L66 24 Z"/><rect x="90" y="14" width="2" height="6"/><path d="M93 10 L102.5 17 L93 24 Z"/><path d="M116 10 L125.5 17 L116 24 Z"/><rect x="126" y="10" width="2.2" height="14"/></g><defs><linearGradient id="tc" x1="0" y1="0" x2="0" y2="1"><stop offset="0" stop-color="#f4f4f6"/><stop offset="1" stop-color="#d4d8de"/></linearGradient><linearGradient id="tf" x1="0" y1="0" x2="0" y2="1"><stop offset="0" stop-color="#e8eaee"/><stop offset="1" stop-color="#a9afbb"/></linearGradient><g id="tcube"><path d="M0.6 4 L4 0.6 L15.4 0.6 L15.4 12 L12 15.4 L0.6 15.4 Z" stroke-linejoin="round"/><path d="M2 4.8 L11.3 4.8 L11.3 14 M11.3 4.8 L14.5 1.8" stroke="#fff" stroke-width="0.9" fill="none" opacity="0.9"/></g><g id="tfil"><path d="M0.6 4 L4 0.6 L10.5 0.6 L15.4 5.5 L15.4 12 L12 15.4 L0.6 15.4 Z" stroke-linejoin="round"/><path d="M9 2 L14 6.5 L12 14 L11.5 14 L11.5 7 Z" fill="#8d96a6" stroke="none" opacity="0.8"/><path d="M2 4.8 L8.5 4.8 L11.5 7.5 L11.5 14" stroke="#fff" stroke-width="0.8" fill="none" opacity="0.9"/></g></defs><rect x="159" y="34" width="1331" height="2.4" fill="#585858"/><rect x="1492" y="35" width="4" height="1.6" fill="#585858"/><rect x="158" y="30" width="2" height="5" fill="#585858"/><use href="#tcube" x="151" y="10" fill="url(#tc)" stroke="#1a1a1a" stroke-width="1.2"/><rect x="182" y="30" width="2" height="5" fill="#585858"/><use href="#tfil" x="175" y="10" fill="url(#tf)" stroke="#1a1a1a" stroke-width="1.2"/><rect x="206" y="30" width="2" height="5" fill="#585858"/><path d="M203.5 10.5 L210.5 10.5 L210.5 13.5 L209 13.5 L209 17 L212.5 19.5 L213.5 21.5 L200.5 21.5 L201.5 19.5 L205 17 L205 13.5 L203.5 13.5 Z" fill="#e6c4b0" stroke="#d6a890" stroke-width="0.8"/><path d="M207 21.5 L207 25.5" stroke="#aaa" stroke-width="0.8"/><rect x="230" y="30" width="2" height="5" fill="#585858"/><use href="#tcube" x="223" y="10" fill="#d4d4d4" stroke="#a8a8a8" stroke-width="1"/><rect x="254" y="30" width="2" height="5" fill="#585858"/><use href="#tfil" x="247" y="10" fill="#d4d4d4" stroke="#a8a8a8" stroke-width="1"/><rect x="278" y="30" width="2" height="5" fill="#585858"/><use href="#tcube" x="271" y="10" fill="#d4d4d4" stroke="#a8a8a8" stroke-width="1"/><rect x="302" y="30" width="2" height="5" fill="#585858"/><use href="#tfil" x="295" y="10" fill="#d4d4d4" stroke="#a8a8a8" stroke-width="1"/><rect x="326" y="30" width="2" height="5" fill="#585858"/><use href="#tcube" x="319" y="10" fill="#d4d4d4" stroke="#a8a8a8" stroke-width="1"/><rect x="350" y="30" width="2" height="5" fill="#585858"/><use href="#tfil" x="343" y="10" fill="#d4d4d4" stroke="#a8a8a8" stroke-width="1"/><rect x="374" y="30" width="2" height="5" fill="#585858"/><use href="#tcube" x="367" y="10" fill="#d4d4d4" stroke="#a8a8a8" stroke-width="1"/><rect x="398" y="30" width="2" height="5" fill="#585858"/><use href="#tfil" x="391" y="10" fill="#d4d4d4" stroke="#a8a8a8" stroke-width="1"/><rect x="422" y="30" width="2" height="5" fill="#585858"/><use href="#tcube" x="415" y="10" fill="#d4d4d4" stroke="#a8a8a8" stroke-width="1"/><rect x="446" y="30" width="2" height="5" fill="#585858"/><use href="#tfil" x="439" y="10" fill="#d4d4d4" stroke="#a8a8a8" stroke-width="1"/><rect x="470" y="30" width="2" height="5" fill="#585858"/><use href="#tcube" x="463" y="10" fill="#d4d4d4" stroke="#a8a8a8" stroke-width="1"/><rect x="494" y="30" width="2" height="5" fill="#585858"/><use href="#tfil" x="487" y="10" fill="#d4d4d4" stroke="#a8a8a8" stroke-width="1"/><rect x="518" y="30" width="2" height="5" fill="#585858"/><use href="#tcube" x="511" y="10" fill="#d4d4d4" stroke="#a8a8a8" stroke-width="1"/><rect x="542" y="30" width="2" height="5" fill="#585858"/><use href="#tfil" x="535" y="10" fill="#d4d4d4" stroke="#a8a8a8" stroke-width="1"/><rect x="566" y="30" width="2" height="5" fill="#585858"/><use href="#tcube" x="559" y="10" fill="#d4d4d4" stroke="#a8a8a8" stroke-width="1"/><rect x="590" y="30" width="2" height="5" fill="#585858"/><use href="#tfil" x="583" y="10" fill="#d4d4d4" stroke="#a8a8a8" stroke-width="1"/><rect x="614" y="30" width="2" height="5" fill="#585858"/><use href="#tcube" x="607" y="10" fill="#d4d4d4" stroke="#a8a8a8" stroke-width="1"/><rect x="638" y="30" width="2" height="5" fill="#585858"/><use href="#tfil" x="631" y="10" fill="#d4d4d4" stroke="#a8a8a8" stroke-width="1"/><rect x="662" y="30" width="2" height="5" fill="#585858"/><use href="#tcube" x="655" y="10" fill="#d4d4d4" stroke="#a8a8a8" stroke-width="1"/><rect x="686" y="30" width="2" height="5" fill="#585858"/><use href="#tfil" x="679" y="10" fill="#d4d4d4" stroke="#a8a8a8" stroke-width="1"/><rect x="710" y="30" width="2" height="5" fill="#585858"/><use href="#tcube" x="703" y="10" fill="#d4d4d4" stroke="#a8a8a8" stroke-width="1"/><rect x="734" y="30" width="2" height="5" fill="#585858"/><use href="#tfil" x="727" y="10" fill="#d4d4d4" stroke="#a8a8a8" stroke-width="1"/><rect x="758" y="30" width="2" height="5" fill="#585858"/><use href="#tcube" x="751" y="10" fill="#d4d4d4" stroke="#a8a8a8" stroke-width="1"/><rect x="782" y="30" width="2" height="5" fill="#585858"/><use href="#tfil" x="775" y="10" fill="#d4d4d4" stroke="#a8a8a8" stroke-width="1"/><rect x="806" y="30" width="2" height="5" fill="#585858"/><use href="#tcube" x="799" y="10" fill="#d4d4d4" stroke="#a8a8a8" stroke-width="1"/><rect x="830" y="30" width="2" height="5" fill="#585858"/><use href="#tfil" x="823" y="10" fill="#d4d4d4" stroke="#a8a8a8" stroke-width="1"/><rect x="854" y="30" width="2" height="5" fill="#585858"/><use href="#tcube" x="847" y="10" fill="#d4d4d4" stroke="#a8a8a8" stroke-width="1"/><rect x="878" y="30" width="2" height="5" fill="#585858"/><use href="#tfil" x="871" y="10" fill="#d4d4d4" stroke="#a8a8a8" stroke-width="1"/><rect x="902" y="30" width="2" height="5" fill="#585858"/><use href="#tcube" x="895" y="10" fill="#d4d4d4" stroke="#a8a8a8" stroke-width="1"/><rect x="926" y="30" width="2" height="5" fill="#585858"/><use href="#tfil" x="919" y="10" fill="#d4d4d4" stroke="#a8a8a8" stroke-width="1"/><rect x="950" y="30" width="2" height="5" fill="#585858"/><use href="#tcube" x="943" y="10" fill="#d4d4d4" stroke="#a8a8a8" stroke-width="1"/><rect x="974" y="30" width="2" height="5" fill="#585858"/><use href="#tfil" x="967" y="10" fill="#d4d4d4" stroke="#a8a8a8" stroke-width="1"/><rect x="998" y="30" width="2" height="5" fill="#585858"/><use href="#tcube" x="991" y="10" fill="#d4d4d4" stroke="#a8a8a8" stroke-width="1"/><rect x="1022" y="30" width="2" height="5" fill="#585858"/><use href="#tcube" x="1015" y="10" fill="#d4d4d4" stroke="#a8a8a8" stroke-width="1"/><rect x="1046" y="30" width="2" height="5" fill="#585858"/><use href="#tcube" x="1039" y="10" fill="#d4d4d4" stroke="#a8a8a8" stroke-width="1"/><rect x="1070" y="30" width="2" height="5" fill="#585858"/><use href="#tcube" x="1063" y="10" fill="#d4d4d4" stroke="#a8a8a8" stroke-width="1"/><rect x="1094" y="30" width="2" height="5" fill="#585858"/><use href="#tcube" x="1087" y="10" fill="#d4d4d4" stroke="#a8a8a8" stroke-width="1"/><rect x="1118" y="30" width="2" height="5" fill="#585858"/><use href="#tcube" x="1111" y="10" fill="#d4d4d4" stroke="#a8a8a8" stroke-width="1"/><rect x="1142" y="30" width="2" height="5" fill="#585858"/><use href="#tcube" x="1135" y="10" fill="#d4d4d4" stroke="#a8a8a8" stroke-width="1"/><rect x="1166" y="30" width="2" height="5" fill="#585858"/><use href="#tcube" x="1159" y="10" fill="#d4d4d4" stroke="#a8a8a8" stroke-width="1"/><rect x="1190" y="30" width="2" height="5" fill="#585858"/><use href="#tcube" x="1183" y="10" fill="#d4d4d4" stroke="#a8a8a8" stroke-width="1"/><rect x="1214" y="30" width="2" height="5" fill="#585858"/><use href="#tcube" x="1207" y="10" fill="#d4d4d4" stroke="#a8a8a8" stroke-width="1"/><rect x="1238" y="30" width="2" height="5" fill="#585858"/><use href="#tcube" x="1231" y="10" fill="#d4d4d4" stroke="#a8a8a8" stroke-width="1"/><rect x="1262" y="30" width="2" height="5" fill="#585858"/><use href="#tcube" x="1255" y="10" fill="#d4d4d4" stroke="#a8a8a8" stroke-width="1"/><rect x="1286" y="30" width="2" height="5" fill="#585858"/><use href="#tcube" x="1279" y="10" fill="#d4d4d4" stroke="#a8a8a8" stroke-width="1"/><rect x="1310" y="30" width="2" height="5" fill="#585858"/><use href="#tcube" x="1303" y="10" fill="#d4d4d4" stroke="#a8a8a8" stroke-width="1"/><rect x="1334" y="30" width="2" height="5" fill="#585858"/><use href="#tcube" x="1327" y="10" fill="#d4d4d4" stroke="#a8a8a8" stroke-width="1"/><rect x="1358" y="30" width="2" height="5" fill="#585858"/><use href="#tcube" x="1351" y="10" fill="#d4d4d4" stroke="#a8a8a8" stroke-width="1"/><rect x="1382" y="30" width="2" height="5" fill="#585858"/><use href="#tcube" x="1375" y="10" fill="#d4d4d4" stroke="#a8a8a8" stroke-width="1"/><rect x="1406" y="30" width="2" height="5" fill="#585858"/><use href="#tcube" x="1399" y="10" fill="#d4d4d4" stroke="#a8a8a8" stroke-width="1"/><rect x="1430" y="30" width="2" height="5" fill="#585858"/><use href="#tcube" x="1423" y="10" fill="#d4d4d4" stroke="#a8a8a8" stroke-width="1"/><rect x="1454" y="30" width="2" height="5" fill="#585858"/><use href="#tcube" x="1447" y="10" fill="#d4d4d4" stroke="#a8a8a8" stroke-width="1"/><rect x="1478" y="30" width="2" height="5" fill="#585858"/><use href="#tfil" x="1471" y="10" fill="#d4d4d4" stroke="#a8a8a8" stroke-width="1"/><g transform="translate(1517 18)"><circle r="6.6" fill="none" stroke="#555" stroke-width="3" stroke-dasharray="2.6 2.58" transform="rotate(-10)"/><circle r="5" fill="none" stroke="#555" stroke-width="3.2"/><circle r="2.4" fill="#cecece"/></g></svg>
<div class="a" style="left:1535px;top:26px;width:5px;height:929px;background:linear-gradient(90deg,#c0dcf6,#eaf4fd 40%,#bcdcfa 60%,#bddff9)"></div>
<div class="a" style="left:0;top:954px;width:1540px;height:6px;border-radius:0 0 5px 0;background:linear-gradient(#dcecfa 0px,#dcecfa 1px,#b8daf8 1px,#b8daf8 5px,#eef6fd 5px)"></div>
<div class="a" style="left:1540px;top:12px;width:1px;height:948px;background:#b8d4ee"></div>
<div class="a" style="left:0;top:960px;width:1541px;height:1px;background:#1e2630"></div>
<div class="a" style="left:0;top:961px;width:1541px;height:8px;background:linear-gradient(#626262,#8e8e8e 50%,#acacac 85%,#c2c2c2)"></div>
<div class="a" style="left:0;top:969px;width:1541px;height:37px;background:linear-gradient(90deg,#b5d5f7 0px,#b2d3f5 900px,#b1d1f2 1265px,#9ab6d6 1285px,#8ea9c6 1305px,#8ba6c3 1541px)"></div>
<div class="a" style="left:0;top:969px;width:1541px;height:37px;background:linear-gradient(#2f3a44 0px,#2f3a44 1px,#c2d6ea 1px,#c2d6ea 2px,rgba(130,160,190,0.6) 2px,rgba(150,180,210,0) 9px)"></div>
<div class="a" style="left:0;top:970px;width:44px;height:36px;background:linear-gradient(#d6e8f8,#b6d3f0);border-right:1px solid #6e89a6"></div>
<div class="a" style="left:48px;top:970px;width:59px;height:36px;background:linear-gradient(#dbeafa,#bad6f2);border:1px solid #6e89a6;border-bottom:none;border-radius:3px 3px 0 0"></div>
<div class="a" style="left:110px;top:970px;width:58px;height:36px;background:linear-gradient(#eef5fd,#cfe2f6);border:1px solid #6e89a6;border-bottom:none;border-radius:3px 3px 0 0"></div>
<svg class="a" style="left:0;top:969px" width="300" height="37">
<path d="M0 9 L8 9 L10 6 L28 6 L30 9 L30 32 L0 32 Z" fill="#f2d27a" stroke="#c9a040" stroke-width="0.8"/><rect x="3" y="6" width="3" height="2" fill="#2bb52b"/><rect x="12" y="8" width="3" height="2" fill="#e03030"/><rect x="20" y="10" width="3" height="2" fill="#2a7ae0"/>
<path d="M3 22 L27 22 L27 35 L23 35 L23 27 L8 27 L8 35 L3 35 Z" fill="#9fd4f2" stroke="#3f8fc0" stroke-width="0.9"/>
<circle cx="77" cy="20" r="15" fill="#db4437"/>
<path d="M77 20 L64 27.5 A15 15 0 0 1 64.5 12 Z" fill="#0f9d58"/><path d="M77 20 L77 35 A15 15 0 0 1 64 27.5 Z" fill="#0f9d58"/>
<path d="M77 20 L90 12.5 A15 15 0 0 1 77 35 Z" fill="#f4b400"/>
<circle cx="77" cy="20" r="7" fill="#fff"/><circle cx="77" cy="20" r="5.5" fill="#4285f4"/>
<rect x="124" y="2" width="31" height="33" fill="#d4ebf9"/>
<path d="M133 6 L147 5 L147 11 L140 12 L140 17 L146 16.5 L146 22 L140 22.5 L140 32 L133 33 Z" fill="#e8912f"/><path d="M133 6 L140 12 L140 32 L133 33 Z" fill="#c56a12"/>
<text x="142" y="32" font-size="7" font-weight="bold" fill="#1a86d0" font-family="Liberation Sans">360</text>
</svg>
<svg class="a" style="left:1320px;top:969px" width="221" height="37" font-family="Liberation Sans">
<circle cx="12" cy="15" r="6" fill="#e07070" opacity="0.8"/><circle cx="13" cy="21" r="5" fill="#111"/>
<rect x="20.5" y="10.5" width="19" height="18" rx="2" fill="#9fb6cf" stroke="#6c7f95"/><rect x="40.5" y="10.5" width="19" height="18" rx="2" fill="#9fb6cf" stroke="#6c7f95"/><rect x="60.5" y="10.5" width="19" height="18" rx="2" fill="#9fb6cf" stroke="#6c7f95"/><rect x="80.5" y="10.5" width="19" height="18" rx="2" fill="#9fb6cf" stroke="#6c7f95"/>
<text x="25" y="25" font-size="12" fill="#fff">A</text><text x="42" y="25" font-size="11" fill="#fff">般</text>
<path d="M63 17 L75 15 L77 23 L65 25 Z" fill="#f2c27a"/><path d="M83 17 L95 15 L97 23 L85 25 Z" fill="#f2b060"/>
<circle cx="111.4" cy="20" r="6" fill="#2a3fb0"/><circle cx="111.4" cy="18" r="3.5" fill="#fff" opacity="0.45"/>
<text x="128" y="26" font-size="8" fill="#fff" letter-spacing="0.5">KANA</text><path d="M154 22 L160 22 L157 25.5 Z" fill="#fff"/>
<path d="M173 24 L179 18.5 L185 24 Z" fill="#e8eef6"/>
<path d="M201 16 L207 16 L207 28 L201 28 Z" fill="#fff" stroke="#222" stroke-width="1.2"/><path d="M196 14 L204 14 L204 29 L196 29 Z" fill="#fff" stroke="#222" stroke-width="1.2"/>
<path d="M202 10.5 L202 16 M206 10.5 L206 16 M199.5 16 L208.5 16 L208.5 21 L204 25 L199.5 21Z M204 25 L204 29" stroke="#222" stroke-width="1.3" fill="#fff"/>
<path d="M214 22 Q216 17 220 19 L221 27 L214 27 Z" fill="#1a86e0"/>
</svg>
<div class="a" style="left:1296px;top:961px;font:30px 'Liberation Serif',serif;color:#6d8fc4;white-space:nowrap;text-shadow:0 0 3px #fff,0 0 2px #fff;opacity:0.95">Screenpresso.com</div>
</body></html>
